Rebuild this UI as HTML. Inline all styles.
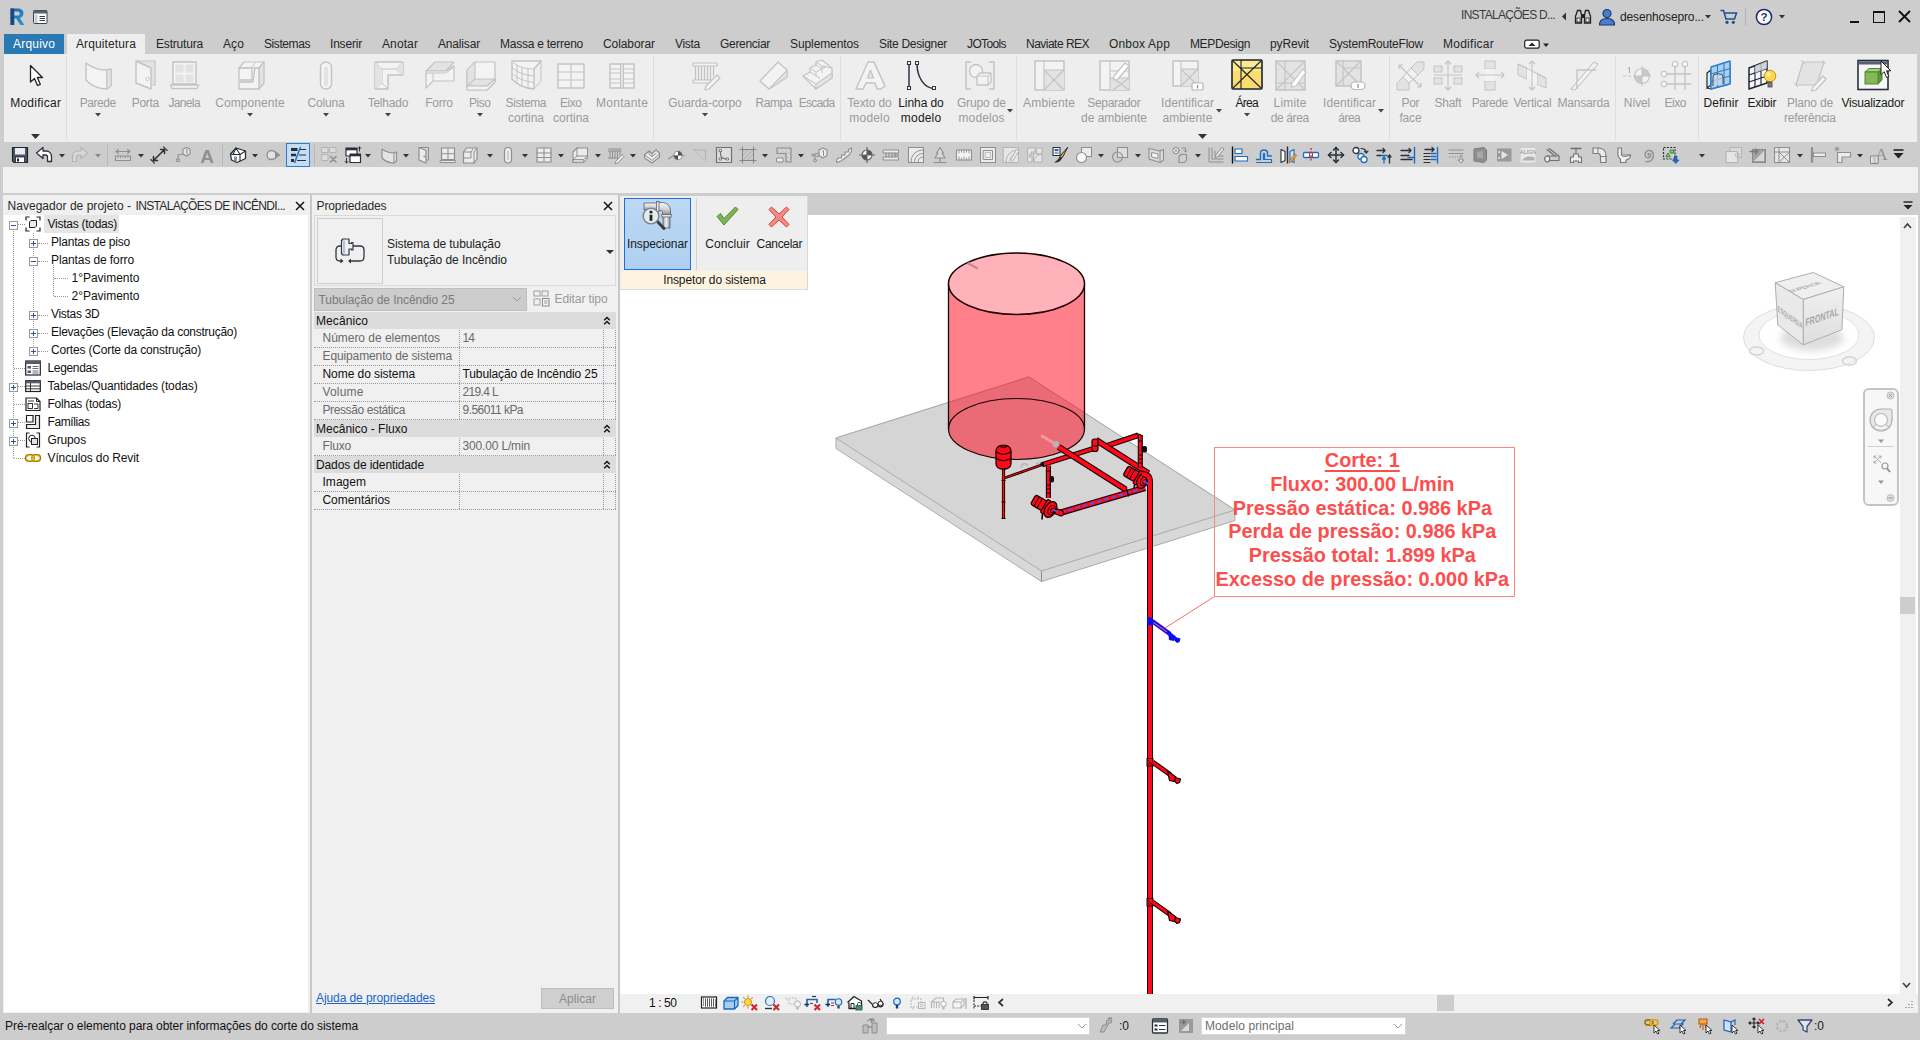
<!DOCTYPE html>
<html lang="pt-BR"><head><meta charset="utf-8"><title>Autodesk Revit - Inspetor do sistema</title>
<style>
html,body{margin:0;padding:0;}
html{width:1920px;height:1040px;overflow:hidden;}
body{width:1920px;height:1040px;overflow:hidden;background:#cdcdcd;font-family:"Liberation Sans", sans-serif;font-size:12px;position:relative;}
div{position:absolute;}
svg{position:absolute;overflow:visible;}
</style></head><body>
<div style="left:0px;top:0px;width:1920px;height:1040px;background:#cdcdcd;"></div>
<div style="left:4px;top:54px;width:1913px;height:88px;background:#eeeeee;"></div>
<div style="left:3px;top:167px;width:1915px;height:26px;background:#f0f0f0;"></div>
<svg style="left:9px;top:7px" width="18" height="20" viewBox="0 0 18 20">
<defs><linearGradient id="rg" x1="0" y1="0" x2="1" y2="1"><stop offset="0" stop-color="#1d63a8"/><stop offset="1" stop-color="#2f9bd0"/></linearGradient></defs>
<path d="M1.5 1.5 H9 C13 1.5 14.5 4 14.5 6.3 C14.5 8.8 13 10.5 10.8 11 L15.5 18 H11.3 L7.2 11.4 H5.2 V18 H1.5 Z M5.2 4.5 V8.6 H8.4 C10 8.6 10.8 7.7 10.8 6.5 C10.8 5.3 10 4.5 8.4 4.5 Z" fill="url(#rg)"/>
<path d="M1.5 1.5 H5.2 V18 H1.5 Z" fill="#164a86"/>
</svg>
<svg style="left:33px;top:10px" width="15" height="14" viewBox="0 0 15 14">
<rect x="0.5" y="0.5" width="13.5" height="13" rx="1" fill="#fff" stroke="#3a3f4d"/>
<rect x="0.5" y="0.5" width="13.5" height="3" fill="#5b6172"/>
<rect x="1.5" y="4.5" width="3" height="8.5" fill="#c9ccd6"/>
<path d="M6.5 6.5H12M6.5 8.5H12M6.5 10.5H12" stroke="#3a3f4d" stroke-width="1"/>
</svg>
<div id="t1" style="top:7.0px;line-height:16px;font-size:12px;color:#3c3c3c;white-space:nowrap;letter-spacing:-0.696px;left:1461px;"><span>INSTALAÇÕES D...</span></div>
<svg style="left:1561px;top:12px" width="6" height="9"><path d="M5 0.5 L1 4.5 L5 8.5Z" fill="#333"/></svg>
<svg style="left:1574px;top:9px" width="18" height="16" viewBox="0 0 18 16">
<path d="M2 6 L3.5 1.5 H6.5 L7.5 6 V14 H1.5 V7Z M10.5 6 L11.5 1.5 H14.5 L16 6 L16.5 7 V14 H10.5Z" fill="none" stroke="#222" stroke-width="1.3"/>
<rect x="7.5" y="5" width="3" height="4" fill="#222"/><rect x="3" y="9" width="3" height="4" fill="#fff" stroke="#222" stroke-width=".8"/><rect x="12" y="9" width="3" height="4" fill="#fff" stroke="#222" stroke-width=".8"/>
</svg>
<svg style="left:1598px;top:8px" width="18" height="18" viewBox="0 0 18 18">
<circle cx="9" cy="5.5" r="4" fill="#4d7cc9" stroke="#173b7a" stroke-width="1.2"/>
<path d="M1.5 17 C1.5 11.5 5 10.5 9 10.5 C13 10.5 16.5 11.5 16.5 17Z" fill="#4d7cc9" stroke="#173b7a" stroke-width="1.2"/>
</svg>
<div id="t2" style="top:9.0px;line-height:16px;font-size:12px;color:#222;white-space:nowrap;letter-spacing:-0.138px;left:1620px;"><span>desenhosepro...</span></div>
<svg style="left:1705px;top:15px" width="6" height="4"><path d="M0 0H6L3 3.500Z" fill="#333"/></svg>
<svg style="left:1720px;top:9px" width="18" height="16" viewBox="0 0 18 16">
<path d="M0.5 1.5 H3.5 L6 10 H14.5 L16.5 4 H4.5" fill="none" stroke="#1d4f91" stroke-width="1.5"/>
<circle cx="7" cy="13.3" r="1.6" fill="#1d4f91"/><circle cx="13.3" cy="13.3" r="1.6" fill="#1d4f91"/>
</svg>
<div style="left:1745px;top:8px;width:1px;height:18px;background:#b5b5b5;"></div>
<svg style="left:1755px;top:8px" width="18" height="18" viewBox="0 0 18 18">
<circle cx="9" cy="9" r="7.6" fill="#fff" stroke="#1b2f6b" stroke-width="1.5"/>
<text x="9" y="13.2" font-size="11.5" font-weight="bold" text-anchor="middle" fill="#1b2f6b" font-family="Liberation Sans, sans-serif">?</text>
</svg>
<svg style="left:1779px;top:15px" width="6" height="4"><path d="M0 0H6L3 3.500Z" fill="#333"/></svg>
<div style="left:1850px;top:21px;width:9px;height:2px;background:#111;"></div>
<div style="left:1873px;top:11px;width:12px;height:12px;border:1.6px solid #111;box-sizing:border-box;border-top-width:2.4px;"></div>
<svg style="left:1898px;top:10px" width="13" height="13"><path d="M1 1L12 12M12 1L1 12" stroke="#111" stroke-width="1.9"/></svg>
<div style="left:4px;top:34px;width:60px;height:20px;background:#2a79b3;"></div>
<div id="t3" style="top:36.0px;line-height:16px;font-size:12px;color:#fff;white-space:nowrap;letter-spacing:0.188px;left:-115.91px;width:300px;text-align:center;"><span>Arquivo</span></div>
<div style="left:67px;top:34px;width:78px;height:20px;background:#eeeeee;"></div>
<div id="t4" style="top:36.0px;line-height:16px;font-size:12px;color:#262626;white-space:nowrap;letter-spacing:0.118px;left:76px;"><span>Arquitetura</span></div>
<div id="t5" style="top:36.0px;line-height:16px;font-size:12px;color:#262626;white-space:nowrap;letter-spacing:-0.188px;left:156px;"><span>Estrutura</span></div>
<div id="t6" style="top:36.0px;line-height:16px;font-size:12px;color:#262626;white-space:nowrap;letter-spacing:0.104px;left:223px;"><span>Aço</span></div>
<div id="t7" style="top:36.0px;line-height:16px;font-size:12px;color:#262626;white-space:nowrap;letter-spacing:-0.420px;left:264px;"><span>Sistemas</span></div>
<div id="t8" style="top:36.0px;line-height:16px;font-size:12px;color:#262626;white-space:nowrap;letter-spacing:-0.192px;left:330px;"><span>Inserir</span></div>
<div id="t9" style="top:36.0px;line-height:16px;font-size:12px;color:#262626;white-space:nowrap;letter-spacing:0.107px;left:382px;"><span>Anotar</span></div>
<div id="t10" style="top:36.0px;line-height:16px;font-size:12px;color:#262626;white-space:nowrap;letter-spacing:-0.170px;left:438px;"><span>Analisar</span></div>
<div id="t11" style="top:36.0px;line-height:16px;font-size:12px;color:#262626;white-space:nowrap;letter-spacing:-0.248px;left:500px;"><span>Massa e terreno</span></div>
<div id="t12" style="top:36.0px;line-height:16px;font-size:12px;color:#262626;white-space:nowrap;letter-spacing:-0.078px;left:603px;"><span>Colaborar</span></div>
<div id="t13" style="top:36.0px;line-height:16px;font-size:12px;color:#262626;white-space:nowrap;letter-spacing:-0.294px;left:675px;"><span>Vista</span></div>
<div id="t14" style="top:36.0px;line-height:16px;font-size:12px;color:#262626;white-space:nowrap;letter-spacing:-0.299px;left:720px;"><span>Gerenciar</span></div>
<div id="t15" style="top:36.0px;line-height:16px;font-size:12px;color:#262626;white-space:nowrap;letter-spacing:-0.095px;left:790px;"><span>Suplementos</span></div>
<div id="t16" style="top:36.0px;line-height:16px;font-size:12px;color:#262626;white-space:nowrap;letter-spacing:-0.311px;left:879px;"><span>Site Designer</span></div>
<div id="t17" style="top:36.0px;line-height:16px;font-size:12px;color:#262626;white-space:nowrap;letter-spacing:-0.623px;left:967px;"><span>JOTools</span></div>
<div id="t18" style="top:36.0px;line-height:16px;font-size:12px;color:#262626;white-space:nowrap;letter-spacing:-0.518px;left:1026px;"><span>Naviate REX</span></div>
<div id="t19" style="top:36.0px;line-height:16px;font-size:12px;color:#262626;white-space:nowrap;letter-spacing:0.179px;left:1109px;"><span>Onbox App</span></div>
<div id="t20" style="top:36.0px;line-height:16px;font-size:12px;color:#262626;white-space:nowrap;letter-spacing:-0.373px;left:1190px;"><span>MEPDesign</span></div>
<div id="t21" style="top:36.0px;line-height:16px;font-size:12px;color:#262626;white-space:nowrap;letter-spacing:-0.145px;left:1270px;"><span>pyRevit</span></div>
<div id="t22" style="top:36.0px;line-height:16px;font-size:12px;color:#262626;white-space:nowrap;letter-spacing:-0.225px;left:1329px;"><span>SystemRouteFlow</span></div>
<div id="t23" style="top:36.0px;line-height:16px;font-size:12px;color:#262626;white-space:nowrap;letter-spacing:0.257px;left:1443px;"><span>Modificar</span></div>
<svg style="left:1524px;top:39px" width="26" height="11" viewBox="0 0 26 11">
<rect x="0.7" y="1.2" width="14.5" height="8" rx="2" fill="#fff" stroke="#222" stroke-width="1.2"/>
<path d="M4.5 7 H11.5 L8 3.6Z" fill="#222"/><path d="M19 4.5H25L22 8Z" fill="#222"/></svg>
<svg style="left:28px;top:64px" width="16" height="24" viewBox="0 0 16 24"><path d="M2.500 1.500 V18 L6.500 14.500 L9.500 21.500 L12.300 20.300 L9.300 13.500 H14.500Z" fill="#fff" stroke="#222" stroke-width="1.300" stroke-linejoin="round"/></svg>
<div id="t24" style="top:95.0px;line-height:16px;font-size:12px;color:#1a1a1a;white-space:nowrap;letter-spacing:0.257px;left:-114.37px;width:300px;text-align:center;"><span>Modificar</span></div>
<svg style="left:31px;top:134px" width="9" height="5"><path d="M0 0H9L4.500 5Z" fill="#333"/></svg>
<svg style="left:82px;top:59px" width="32" height="32" viewBox="0 0 32 32"><path d="M4 4 C10 9 18 11 25 11 L29 10 V27 L25 30 C16 30 8 26 4 21 Z" fill="#f3f3f3" stroke="#c3c3c3" stroke-width="1.4" stroke-linejoin="round"/><path d="M25 11 V30" fill="none" stroke="#c3c3c3" stroke-width="1.2" stroke-linejoin="round"/><path d="M25 11 L29 10 V27 L25 30Z" fill="#e3e3e3" stroke="#c3c3c3" stroke-width="1" stroke-linejoin="round"/></svg>
<div id="t25" style="top:95.0px;line-height:16px;font-size:12px;color:#9b9b9b;white-space:nowrap;letter-spacing:-0.451px;left:-52.23px;width:300px;text-align:center;"><span>Parede</span></div>
<svg style="left:95.0px;top:113px" width="6" height="4"><path d="M0 0H6L3 3.500Z" fill="#444"/></svg>
<svg style="left:130px;top:59px" width="32" height="32" viewBox="0 0 32 32"><path d="M6 2 H25 V26 H21" fill="#e3e3e3" stroke="#c3c3c3" stroke-width="1.2" stroke-linejoin="round"/><path d="M6 2 L21 9 V30 L6 24Z" fill="#f3f3f3" stroke="#c3c3c3" stroke-width="1.4" stroke-linejoin="round"/><circle cx="17.5" cy="20" r="1.6" fill="#fff" stroke="#c3c3c3" stroke-width="1" stroke-linejoin="round"/></svg>
<div id="t26" style="top:95.0px;line-height:16px;font-size:12px;color:#9b9b9b;white-space:nowrap;letter-spacing:-0.338px;left:-4.67px;width:300px;text-align:center;"><span>Porta</span></div>
<svg style="left:168px;top:59px" width="32" height="32" viewBox="0 0 32 32"><rect x="5" y="3" width="23" height="22" fill="#f3f3f3" stroke="#c3c3c3" stroke-width="1.4" stroke-linejoin="round"/><rect x="7.5" y="5.5" width="8" height="8" fill="#e3e3e3"/><rect x="17.5" y="5.5" width="8" height="8" fill="#e3e3e3"/><rect x="7.5" y="15.5" width="8" height="8" fill="#e3e3e3"/><rect x="17.5" y="15.5" width="8" height="8" fill="#e3e3e3"/><path d="M2.5 26 H30.5 L29 29.5 H4Z" fill="#f3f3f3" stroke="#c3c3c3" stroke-width="1.3" stroke-linejoin="round"/></svg>
<div id="t27" style="top:95.0px;line-height:16px;font-size:12px;color:#9b9b9b;white-space:nowrap;letter-spacing:-0.646px;left:34.18px;width:300px;text-align:center;"><span>Janela</span></div>
<svg style="left:234px;top:59px" width="32" height="32" viewBox="0 0 32 32"><path d="M5 9 L10 3 H30 L25 9Z" fill="#f3f3f3" stroke="#c3c3c3" stroke-width="1.2" stroke-linejoin="round"/><path d="M25 9 L30 3 V24 L25 30Z" fill="#e3e3e3" stroke="#c3c3c3" stroke-width="1.2" stroke-linejoin="round"/><path d="M5 9 H18 V21 H5Z" fill="#f3f3f3" stroke="#c3c3c3" stroke-width="1.3" stroke-linejoin="round"/><path d="M5 23 H19 L21 9 H25 V30 H5Z" fill="#f3f3f3" stroke="#c3c3c3" stroke-width="1.3" stroke-linejoin="round"/><path d="M18 9 L21 4" fill="none" stroke="#c3c3c3" stroke-width="1" stroke-linejoin="round"/></svg>
<div id="t28" style="top:95.0px;line-height:16px;font-size:12px;color:#9b9b9b;white-space:nowrap;letter-spacing:0.078px;left:100.04px;width:300px;text-align:center;"><span>Componente</span></div>
<svg style="left:247.0px;top:113px" width="6" height="4"><path d="M0 0H6L3 3.500Z" fill="#444"/></svg>
<svg style="left:310px;top:59px" width="32" height="32" viewBox="0 0 32 32"><rect x="10.5" y="3" width="11" height="27" rx="5.5" fill="#f3f3f3" stroke="#c3c3c3" stroke-width="1.4" stroke-linejoin="round"/><rect x="14" y="8" width="4" height="19" fill="#e3e3e3"/></svg>
<div id="t29" style="top:95.0px;line-height:16px;font-size:12px;color:#9b9b9b;white-space:nowrap;letter-spacing:-0.172px;left:175.91px;width:300px;text-align:center;"><span>Coluna</span></div>
<svg style="left:323.0px;top:113px" width="6" height="4"><path d="M0 0H6L3 3.500Z" fill="#444"/></svg>
<svg style="left:372px;top:59px" width="32" height="32" viewBox="0 0 32 32"><path d="M3 3 H31 V16 H16 V30 H3Z" fill="#f3f3f3" stroke="#c3c3c3" stroke-width="1.5" stroke-linejoin="round"/><path d="M3 3 L10 10 H31 M10 10 V24 L3 30 M10 24 L16 30 M24 10 L31 3 M24 10 L31 16" fill="none" stroke="#c3c3c3" stroke-width="1" stroke-linejoin="round"/><path d="M3 3 L10 10 V24 L3 30Z" fill="#e3e3e3"/><path d="M24 10 L31 3 V16Z" fill="#e3e3e3"/></svg>
<div id="t30" style="top:95.0px;line-height:16px;font-size:12px;color:#9b9b9b;white-space:nowrap;letter-spacing:-0.221px;left:237.89px;width:300px;text-align:center;"><span>Telhado</span></div>
<svg style="left:385.0px;top:113px" width="6" height="4"><path d="M0 0H6L3 3.500Z" fill="#444"/></svg>
<svg style="left:423px;top:59px" width="32" height="32" viewBox="0 0 32 32"><path d="M3 12 L12 3 H31 L23 12Z" fill="#e3e3e3" stroke="#c3c3c3" stroke-width="1.2" stroke-linejoin="round"/><path d="M3 12 H23 L31 7 V22 H10 L3 29Z" fill="#f3f3f3" stroke="#c3c3c3" stroke-width="1.2" stroke-linejoin="round"/><path d="M3 14 H23 L31 8" fill="none" stroke="#c3c3c3" stroke-width="1" stroke-linejoin="round"/><path d="M10 14 V22" fill="none" stroke="#c3c3c3" stroke-width="1" stroke-linejoin="round"/></svg>
<div id="t31" style="top:95.0px;line-height:16px;font-size:12px;color:#9b9b9b;white-space:nowrap;letter-spacing:-0.234px;left:288.88px;width:300px;text-align:center;"><span>Forro</span></div>
<svg style="left:464px;top:59px" width="32" height="32" viewBox="0 0 32 32"><path d="M3 11 L11 3 H31 V23 L23 31 H3Z" fill="#f3f3f3" stroke="#c3c3c3" stroke-width="1.2" stroke-linejoin="round"/><path d="M3 11 L11 3 V20 L3 28Z" fill="#e3e3e3" stroke="#c3c3c3"/><path d="M3 27 L11 20 H31 L23 27Z" fill="#e3e3e3" stroke="#c3c3c3" stroke-width="1.1" stroke-linejoin="round"/><path d="M3 27 H23 L31 20 V23 L23 31 H3Z" fill="#f3f3f3" stroke="#c3c3c3" stroke-width="1.1" stroke-linejoin="round"/></svg>
<div id="t32" style="top:95.0px;line-height:16px;font-size:12px;color:#9b9b9b;white-space:nowrap;letter-spacing:-0.461px;left:329.77px;width:300px;text-align:center;"><span>Piso</span></div>
<svg style="left:477.0px;top:113px" width="6" height="4"><path d="M0 0H6L3 3.500Z" fill="#444"/></svg>
<svg style="left:510px;top:59px" width="32" height="32" viewBox="0 0 32 32"><path d="M2 2 H31 L24 10 V30 C14 29 6 25 2 20Z" fill="#f3f3f3" stroke="#c3c3c3" stroke-width="1.4" stroke-linejoin="round"/><path d="M2 2 C6 7 14 10 24 10 M2 8 C6 13 14 16 24 17 M2 14 C6 19 14 22 24 23.5 M7 6 V24 M12 8 V27 M18 9.5 V29 M24 10 L31 2 V22 L24 30" fill="none" stroke="#c3c3c3" stroke-width="1" stroke-linejoin="round"/></svg>
<div id="t33" style="top:95.0px;line-height:16px;font-size:12px;color:#9b9b9b;white-space:nowrap;letter-spacing:-0.408px;left:375.80px;width:300px;text-align:center;"><span>Sistema</span></div>
<div id="t34" style="top:110.0px;line-height:16px;font-size:12px;color:#9b9b9b;white-space:nowrap;letter-spacing:-0.004px;left:376.00px;width:300px;text-align:center;"><span>cortina</span></div>
<svg style="left:555px;top:59px" width="32" height="32" viewBox="0 0 32 32"><rect x="3" y="5" width="26" height="24" fill="#f3f3f3" stroke="#c3c3c3" stroke-width="1.4" stroke-linejoin="round"/><path d="M16 5 V29 M3 13 H29 M3 21 H29" fill="none" stroke="#c3c3c3" stroke-width="1.1" stroke-linejoin="round"/></svg>
<div id="t35" style="top:95.0px;line-height:16px;font-size:12px;color:#9b9b9b;white-space:nowrap;letter-spacing:-0.461px;left:420.77px;width:300px;text-align:center;"><span>Eixo</span></div>
<div id="t36" style="top:110.0px;line-height:16px;font-size:12px;color:#9b9b9b;white-space:nowrap;letter-spacing:-0.004px;left:421.00px;width:300px;text-align:center;"><span>cortina</span></div>
<svg style="left:606px;top:59px" width="32" height="32" viewBox="0 0 32 32"><rect x="4" y="5" width="24" height="24" fill="#f3f3f3" stroke="#c3c3c3" stroke-width="1.4" stroke-linejoin="round"/><path d="M4 10 H28 M4 14 H28 M4 20 H28 M4 24 H28" fill="none" stroke="#c3c3c3" stroke-width="1" stroke-linejoin="round"/><rect x="14.5" y="5" width="3" height="24" fill="#e3e3e3" stroke="#c3c3c3" stroke-width="1" stroke-linejoin="round"/></svg>
<div id="t37" style="top:95.0px;line-height:16px;font-size:12px;color:#9b9b9b;white-space:nowrap;letter-spacing:0.244px;left:472.12px;width:300px;text-align:center;"><span>Montante</span></div>
<svg style="left:689px;top:59px" width="32" height="32" viewBox="0 0 32 32"><rect x="4" y="4" width="24" height="3" fill="#f3f3f3" stroke="#c3c3c3" stroke-width="1.2" stroke-linejoin="round"/><rect x="4" y="21" width="20" height="3" fill="#f3f3f3" stroke="#c3c3c3" stroke-width="1.2" stroke-linejoin="round"/><path d="M6.5 7V21M9.5 7V21M12.5 7V21M15.5 7V21M18.5 7V21M21.5 7V21M24.5 7V17" fill="none" stroke="#c3c3c3" stroke-width="1.1" stroke-linejoin="round"/><path d="M17 27 L28 16 L31 19 L20 30 L16 31Z" fill="#f3f3f3" stroke="#c3c3c3" stroke-width="1.2" stroke-linejoin="round"/></svg>
<div id="t38" style="top:95.0px;line-height:16px;font-size:12px;color:#9b9b9b;white-space:nowrap;letter-spacing:-0.046px;left:554.98px;width:300px;text-align:center;"><span>Guarda-corpo</span></div>
<svg style="left:702.0px;top:113px" width="6" height="4"><path d="M0 0H6L3 3.500Z" fill="#444"/></svg>
<svg style="left:758px;top:59px" width="32" height="32" viewBox="0 0 32 32"><path d="M2 22 L20 3 L29 11 V18 L11 30Z" fill="#f3f3f3" stroke="#c3c3c3" stroke-width="1.3" stroke-linejoin="round"/><path d="M29 11 L11 30 M29 11 V18 L11 30Z" fill="#e3e3e3" stroke="#c3c3c3" stroke-width="1" stroke-linejoin="round"/></svg>
<div id="t39" style="top:95.0px;line-height:16px;font-size:12px;color:#9b9b9b;white-space:nowrap;letter-spacing:-0.438px;left:623.78px;width:300px;text-align:center;"><span>Rampa</span></div>
<svg style="left:801px;top:59px" width="32" height="32" viewBox="0 0 32 32"><path d="M2 17 L9 13 V9 L15 6 V3 L21 1 L31 9 V19 L15 30 Z" fill="#f3f3f3" stroke="#c3c3c3" stroke-width="1.3" stroke-linejoin="round"/><path d="M2 17 L15 25 V30 M15 25 L31 14 M9 13 L19 19.500 M9 9 L15 13 V16.500 M15 13 L25 7.500 M15 6 L21 10 V14 M15 3 L21 7 L31 9 M21 7 V10" fill="none" stroke="#c3c3c3" stroke-width="1" stroke-linejoin="round"/><path d="M15 25 L31 14 V19 L15 30Z" fill="#e3e3e3" stroke="#c3c3c3"/></svg>
<div id="t40" style="top:95.0px;line-height:16px;font-size:12px;color:#9b9b9b;white-space:nowrap;letter-spacing:-0.755px;left:666.62px;width:300px;text-align:center;"><span>Escada</span></div>
<svg style="left:854px;top:59px" width="32" height="32" viewBox="0 0 32 32"><path d="M2 30 L14 3 H20 L31 27 L27 30 H23 L21 24 H12 L9 30Z" fill="#f3f3f3" stroke="#c3c3c3" stroke-width="1.4" stroke-linejoin="round"/><path d="M13.5 19 L16.5 11 L19.5 19Z" fill="#e3e3e3" stroke="#c3c3c3" stroke-width="1.2" stroke-linejoin="round"/><path d="M20 3 L31 27" fill="none" stroke="#c3c3c3" stroke-width="1" stroke-linejoin="round"/></svg>
<div id="t41" style="top:95.0px;line-height:16px;font-size:12px;color:#9b9b9b;white-space:nowrap;letter-spacing:-0.109px;left:719.45px;width:300px;text-align:center;"><span>Texto do</span></div>
<div id="t42" style="top:110.0px;line-height:16px;font-size:12px;color:#9b9b9b;white-space:nowrap;letter-spacing:0.190px;left:719.60px;width:300px;text-align:center;"><span>modelo</span></div>
<svg style="left:902px;top:59px" width="32" height="32" viewBox="0 0 32 32"><path d="M7 4.5 V27.5" fill="none" stroke="#2b3544" stroke-width="1.5" stroke-linejoin="round"/><path d="M15 4.5 C15 18 22 29 32 29.5" fill="none" stroke="#2b3544" stroke-width="1.5" stroke-linejoin="round"/><rect x="5.5" y="2.5" width="3" height="3" fill="#fff" stroke="#2b3544" stroke-width="1.1" stroke-linejoin="round"/><rect x="5.5" y="27.5" width="3" height="3" fill="#fff" stroke="#2b3544" stroke-width="1.1" stroke-linejoin="round"/><rect x="13.5" y="2.5" width="3" height="3" fill="#fff" stroke="#2b3544" stroke-width="1.1" stroke-linejoin="round"/><rect x="30.5" y="27.5" width="3" height="3" fill="#fff" stroke="#2b3544" stroke-width="1.1" stroke-linejoin="round"/></svg>
<div id="t43" style="top:95.0px;line-height:16px;font-size:12px;color:#1a1a1a;white-space:nowrap;letter-spacing:-0.068px;left:770.97px;width:300px;text-align:center;"><span>Linha do</span></div>
<div id="t44" style="top:110.0px;line-height:16px;font-size:12px;color:#1a1a1a;white-space:nowrap;letter-spacing:0.190px;left:771.10px;width:300px;text-align:center;"><span>modelo</span></div>
<svg style="left:964px;top:59px" width="32" height="32" viewBox="0 0 32 32"><path d="M7 3 H2 V30 H7 M25 3 H30 V30 H25" fill="none" stroke="#c3c3c3" stroke-width="1.5" stroke-linejoin="round"/><circle cx="12" cy="12" r="6.5" fill="#f3f3f3" stroke="#c3c3c3" stroke-width="1.3" stroke-linejoin="round"/><path d="M13 17 L16 14 H27 V23 L24 26 H13Z" fill="#f3f3f3" stroke="#c3c3c3" stroke-width="1.3" stroke-linejoin="round"/><path d="M13 17 H24 V26 M24 17 L27 14" fill="none" stroke="#c3c3c3" stroke-width="1" stroke-linejoin="round"/></svg>
<div id="t45" style="top:95.0px;line-height:16px;font-size:12px;color:#9b9b9b;white-space:nowrap;letter-spacing:-0.131px;left:831.43px;width:300px;text-align:center;"><span>Grupo de</span></div>
<div id="t46" style="top:110.0px;line-height:16px;font-size:12px;color:#9b9b9b;white-space:nowrap;letter-spacing:0.092px;left:831.55px;width:300px;text-align:center;"><span>modelos</span></div>
<svg style="left:1007px;top:109px" width="6" height="4"><path d="M0 0H6L3 3.500Z" fill="#444"/></svg>
<svg style="left:1033px;top:59px" width="32" height="32" viewBox="0 0 32 32"><rect x="2" y="2" width="29" height="29" fill="#f3f3f3" stroke="#c3c3c3" stroke-width="1.5" stroke-linejoin="round"/><rect x="11" y="11" width="20" height="20" fill="#e3e3e3"/><path d="M11 2 V31 M11 11 H31 M11 11 L31 31 M31 11 L11 31" fill="none" stroke="#c3c3c3" stroke-width="1.1" stroke-linejoin="round"/></svg>
<div id="t47" style="top:95.0px;line-height:16px;font-size:12px;color:#9b9b9b;white-space:nowrap;letter-spacing:0.162px;left:899.08px;width:300px;text-align:center;"><span>Ambiente</span></div>
<svg style="left:1098px;top:59px" width="32" height="32" viewBox="0 0 32 32"><rect x="2" y="2" width="29" height="29" fill="#f3f3f3" stroke="#c3c3c3" stroke-width="1.5" stroke-linejoin="round"/><rect x="12" y="19" width="19" height="12" fill="#e3e3e3"/><path d="M12 2 V31 M12 12 H31 M12 19 H31 M15 19 L31 31 M31 19 L15 31" fill="none" stroke="#c3c3c3" stroke-width="1.1" stroke-linejoin="round"/><path d="M16 17 L27 4 L31 7 L20 20 L15.5 21Z" fill="#fff" stroke="#c3c3c3" stroke-width="1.2" stroke-linejoin="round"/></svg>
<div id="t48" style="top:95.0px;line-height:16px;font-size:12px;color:#9b9b9b;white-space:nowrap;letter-spacing:-0.339px;left:963.83px;width:300px;text-align:center;"><span>Separador</span></div>
<div id="t49" style="top:110.0px;line-height:16px;font-size:12px;color:#9b9b9b;white-space:nowrap;letter-spacing:-0.004px;left:964.00px;width:300px;text-align:center;"><span>de ambiente</span></div>
<svg style="left:1169px;top:59px" width="32" height="32" viewBox="0 0 32 32"><rect x="4" y="2" width="25" height="25" fill="#f3f3f3" stroke="#c3c3c3" stroke-width="1.5" stroke-linejoin="round"/><rect x="12" y="10" width="17" height="17" fill="#e3e3e3"/><path d="M12 2 V27 M12 10 H29 M12 10 L29 27 M29 10 L12 27" fill="none" stroke="#c3c3c3" stroke-width="1.1" stroke-linejoin="round"/><rect x="23" y="24" width="11" height="7" rx="1" fill="#fff" stroke="#b5b5b5" stroke-width="1.2" stroke-linejoin="round"/><path d="M28.5 26 V29.5" stroke="#888" stroke-width="1.2"/></svg>
<div id="t50" style="top:95.0px;line-height:16px;font-size:12px;color:#9b9b9b;white-space:nowrap;letter-spacing:0.088px;left:1037.54px;width:300px;text-align:center;"><span>Identificar</span></div>
<div id="t51" style="top:110.0px;line-height:16px;font-size:12px;color:#9b9b9b;white-space:nowrap;letter-spacing:0.078px;left:1037.54px;width:300px;text-align:center;"><span>ambiente</span></div>
<svg style="left:1216px;top:109px" width="6" height="4"><path d="M0 0H6L3 3.500Z" fill="#444"/></svg>
<svg style="left:1231px;top:59px" width="32" height="32" viewBox="0 0 32 32"><rect x="1" y="1" width="30" height="29" rx="1" fill="#fbdc6e" stroke="#1c2330" stroke-width="1.6"/><rect x="2" y="2" width="28" height="10" fill="#fde98f"/><path d="M2 2 L30 29 M30 2 L2 29 M10 1 V30 M10 9 H31" stroke="#1c2330" stroke-width="1.1" fill="none"/></svg>
<div id="t52" style="top:95.0px;line-height:16px;font-size:12px;color:#1a1a1a;white-space:nowrap;letter-spacing:-0.715px;left:1096.64px;width:300px;text-align:center;"><span>Área</span></div>
<svg style="left:1244.0px;top:113px" width="6" height="4"><path d="M0 0H6L3 3.500Z" fill="#444"/></svg>
<svg style="left:1274px;top:59px" width="32" height="32" viewBox="0 0 32 32"><rect x="2" y="2" width="29" height="29" fill="#e3e3e3" stroke="#c3c3c3" stroke-width="1.5" stroke-linejoin="round"/><path d="M2 2 L31 31 M31 2 L2 31 M11 2 V31 M2 24 H31" fill="none" stroke="#c3c3c3" stroke-width="1.1" stroke-linejoin="round"/><path d="M18 24 L29 10 L32 13 L22 27 L17 28Z" fill="#fff" stroke="#c3c3c3" stroke-width="1.2" stroke-linejoin="round"/></svg>
<div id="t53" style="top:95.0px;line-height:16px;font-size:12px;color:#9b9b9b;white-space:nowrap;letter-spacing:0.164px;left:1140.08px;width:300px;text-align:center;"><span>Limite</span></div>
<div id="t54" style="top:110.0px;line-height:16px;font-size:12px;color:#9b9b9b;white-space:nowrap;letter-spacing:-0.386px;left:1139.81px;width:300px;text-align:center;"><span>de área</span></div>
<svg style="left:1332px;top:59px" width="32" height="32" viewBox="0 0 32 32"><rect x="4" y="2" width="25" height="25" fill="#e3e3e3" stroke="#c3c3c3" stroke-width="1.5" stroke-linejoin="round"/><path d="M4 2 L29 27 M29 2 L4 27 M11 2 V27 M11 9 H29" fill="none" stroke="#c3c3c3" stroke-width="1.1" stroke-linejoin="round"/><rect x="19" y="23" width="14" height="7.5" rx="3.7" fill="#fff" stroke="#b5b5b5" stroke-width="1.2" stroke-linejoin="round"/><path d="M26 25 V29" stroke="#888" stroke-width="1.2"/></svg>
<div id="t55" style="top:95.0px;line-height:16px;font-size:12px;color:#9b9b9b;white-space:nowrap;letter-spacing:0.088px;left:1199.54px;width:300px;text-align:center;"><span>Identificar</span></div>
<div id="t56" style="top:110.0px;line-height:16px;font-size:12px;color:#9b9b9b;white-space:nowrap;letter-spacing:-0.508px;left:1199.25px;width:300px;text-align:center;"><span>área</span></div>
<svg style="left:1378px;top:109px" width="6" height="4"><path d="M0 0H6L3 3.500Z" fill="#444"/></svg>
<svg style="left:1394px;top:59px" width="32" height="32" viewBox="0 0 32 32"><path d="M3 24 L9 18 L15 24 V31 H3Z" fill="#e3e3e3" stroke="#c3c3c3" stroke-width="1" stroke-linejoin="round"/><path d="M17 9 L23 3 H30 V10 L24 16Z" fill="#e3e3e3" stroke="#c3c3c3" stroke-width="1" stroke-linejoin="round"/><path d="M9 18 L17 9 L24 16 L15 24Z" fill="#f3f3f3" stroke="#c3c3c3" stroke-width="1" stroke-linejoin="round"/><path d="M5 6 L27 28 M5 6 V10 M5 6 H9 M27 28 V24 M27 28 H23" fill="none" stroke="#c3c3c3" stroke-width="1.2" stroke-linejoin="round"/></svg>
<div id="t57" style="top:95.0px;line-height:16px;font-size:12px;color:#9b9b9b;white-space:nowrap;letter-spacing:-0.229px;left:1260.39px;width:300px;text-align:center;"><span>Por</span></div>
<div id="t58" style="top:110.0px;line-height:16px;font-size:12px;color:#9b9b9b;white-space:nowrap;letter-spacing:-0.172px;left:1260.41px;width:300px;text-align:center;"><span>face</span></div>
<svg style="left:1432px;top:59px" width="32" height="32" viewBox="0 0 32 32"><rect x="2" y="7" width="8" height="6" fill="#e3e3e3" stroke="#c3c3c3"/><rect x="22" y="7" width="8" height="6" fill="#e3e3e3" stroke="#c3c3c3"/><rect x="2" y="19" width="8" height="6" fill="#e3e3e3" stroke="#c3c3c3"/><rect x="22" y="19" width="8" height="6" fill="#e3e3e3" stroke="#c3c3c3"/><path d="M2 16 H30 M16 2 V31 M13 5 L16 2 L19 5 M13 28 L16 31 L19 28" fill="none" stroke="#c3c3c3" stroke-width="1.1" stroke-linejoin="round"/></svg>
<div id="t59" style="top:95.0px;line-height:16px;font-size:12px;color:#9b9b9b;white-space:nowrap;letter-spacing:-0.206px;left:1297.90px;width:300px;text-align:center;"><span>Shaft</span></div>
<svg style="left:1474px;top:59px" width="32" height="32" viewBox="0 0 32 32"><rect x="11" y="2" width="10" height="8" fill="#e3e3e3" stroke="#c3c3c3"/><rect x="11" y="22" width="10" height="9" fill="#e3e3e3" stroke="#c3c3c3"/><rect x="11" y="10" width="10" height="12" fill="#f3f3f3"/><path d="M2 16 H30 M5 13 L2 16 L5 19 M27 13 L30 16 L27 19" fill="none" stroke="#c3c3c3" stroke-width="1.1" stroke-linejoin="round"/></svg>
<div id="t60" style="top:95.0px;line-height:16px;font-size:12px;color:#9b9b9b;white-space:nowrap;letter-spacing:-0.451px;left:1339.77px;width:300px;text-align:center;"><span>Parede</span></div>
<svg style="left:1516px;top:59px" width="32" height="32" viewBox="0 0 32 32"><path d="M2 5 L11 9 V20 L2 16Z" fill="#e3e3e3" stroke="#c3c3c3"/><path d="M21 15 L30 19 V29 L21 25Z" fill="#e3e3e3" stroke="#c3c3c3"/><path d="M11 9 L21 15 V25 L11 20Z" fill="#f3f3f3"/><path d="M2 5 L30 19 M16 2 V31 M13 5 L16 2 L19 5 M13 28 L16 31 L19 28" fill="none" stroke="#c3c3c3" stroke-width="1.1" stroke-linejoin="round"/></svg>
<div id="t61" style="top:95.0px;line-height:16px;font-size:12px;color:#9b9b9b;white-space:nowrap;letter-spacing:-0.170px;left:1382.41px;width:300px;text-align:center;"><span>Vertical</span></div>
<svg style="left:1568px;top:59px" width="32" height="32" viewBox="0 0 32 32"><path d="M3 30 L26 3 L30 5 L7 31Z" fill="#f3f3f3" stroke="#c3c3c3" stroke-width="1.1" stroke-linejoin="round"/><path d="M9 30 V11 H28" fill="none" stroke="#c3c3c3" stroke-width="1.3" stroke-linejoin="round"/></svg>
<div id="t62" style="top:95.0px;line-height:16px;font-size:12px;color:#9b9b9b;white-space:nowrap;letter-spacing:-0.172px;left:1433.41px;width:300px;text-align:center;"><span>Mansarda</span></div>
<svg style="left:1621px;top:59px" width="32" height="32" viewBox="0 0 32 32"><circle cx="21" cy="17" r="7.5" fill="#f3f3f3" stroke="#c3c3c3" stroke-width="1.2"/><path d="M21 17 V9.5 A7.5 7.5 0 0 1 28.500 17Z M21 17 V24.5 A7.5 7.5 0 0 1 13.5 17Z" fill="#c8c8c8"/><path d="M2 17 H5 M7 17 H10 M12 17 H30 M21 7 V27" fill="none" stroke="#c3c3c3" stroke-width="1.1" stroke-linejoin="round"/><path d="M7 9.5 L8.5 8.5 V14" fill="none" stroke="#b0b0b0" stroke-width="1.1" stroke-linejoin="round"/></svg>
<div id="t63" style="top:95.0px;line-height:16px;font-size:12px;color:#9b9b9b;white-space:nowrap;letter-spacing:-0.269px;left:1486.87px;width:300px;text-align:center;"><span>Nível</span></div>
<svg style="left:1660px;top:59px" width="32" height="32" viewBox="0 0 32 32"><path d="M7 15 H31 M7 25 H31 M15 8 V31 M25 8 V31" fill="none" stroke="#c3c3c3" stroke-width="1.3" stroke-linejoin="round"/><circle cx="15" cy="5" r="2.7" fill="#fff" stroke="#c3c3c3" stroke-width="1.2" stroke-linejoin="round"/><circle cx="25" cy="5" r="2.7" fill="#fff" stroke="#c3c3c3" stroke-width="1.2" stroke-linejoin="round"/><circle cx="4" cy="15" r="2.7" fill="#fff" stroke="#c3c3c3" stroke-width="1.2" stroke-linejoin="round"/><circle cx="4" cy="25" r="2.7" fill="#fff" stroke="#c3c3c3" stroke-width="1.2" stroke-linejoin="round"/></svg>
<div id="t64" style="top:95.0px;line-height:16px;font-size:12px;color:#9b9b9b;white-space:nowrap;letter-spacing:-0.461px;left:1525.27px;width:300px;text-align:center;"><span>Eixo</span></div>
<svg style="left:1705px;top:59px" width="32" height="32" viewBox="0 0 32 32"><path d="M2 14 L6 11 V26 L2 29Z" fill="#e8eef6" stroke="#1c2330" stroke-width="1.2"/><path d="M6 11 L25 4 V25 L6 30 L2 29" fill="none" stroke="#1c2330" stroke-width="1"/><path d="M6 8 L25 2 V25 L6 30Z" fill="#a9d0ee" stroke="#2a7fd0" stroke-width="1.4" stroke-linejoin="round"/><path d="M6 15 L25 9.500 M6 22.5 L25 17 M12.5 6 V28.3 M19 4 V26.6" stroke="#2a7fd0" stroke-width="1.1"/><path d="M8 27 V18 Q8 15 11 15 H15 Q18 15 18 18 V25" fill="#c9dcee" fill-opacity=".7" stroke="#4a4a4a" stroke-width="1"/></svg>
<div id="t65" style="top:95.0px;line-height:16px;font-size:12px;color:#1a1a1a;white-space:nowrap;letter-spacing:0.045px;left:1571.02px;width:300px;text-align:center;"><span>Definir</span></div>
<svg style="left:1746px;top:59px" width="32" height="32" viewBox="0 0 32 32"><path d="M3 9 L21 2 V24 L3 30Z" fill="#f4f5f8" stroke="#20242e" stroke-width="1.5" stroke-linejoin="round"/><path d="M3 16 L21 9.500 M3 23 L21 17 M9 6.700 V28 M15 4.400 V26" stroke="#20242e" stroke-width="1.1"/><path d="M9 6.700 L21 2 V9.5 L9 14Z" fill="#c8ccd6" fill-opacity=".8"/><circle cx="24" cy="17" r="5.800" fill="#ffd84a" stroke="#c79a12" stroke-width="1"/><circle cx="22.500" cy="15.500" r="2.200" fill="#fff3b0"/><rect x="22" y="23" width="4" height="5" fill="#7a7a7a" stroke="#444" stroke-width=".8"/></svg>
<div id="t66" style="top:95.0px;line-height:16px;font-size:12px;color:#1a1a1a;white-space:nowrap;letter-spacing:-0.169px;left:1611.92px;width:300px;text-align:center;"><span>Exibir</span></div>
<svg style="left:1794px;top:59px" width="32" height="32" viewBox="0 0 32 32"><path d="M9 3 L30 3 L23 26 L2 26Z" fill="#e3e3e3" stroke="#c3c3c3" stroke-width="1.2" stroke-linejoin="round"/><path d="M7 1 L11 5 M28 1 L32 5 M0 24 L4 28" fill="none" stroke="#c3c3c3" stroke-width="1" stroke-linejoin="round"/><path d="M19 28 L29 17 L32 20 L22 31 L17.500 32Z" fill="#f3f3f3" stroke="#c3c3c3" stroke-width="1.2" stroke-linejoin="round"/></svg>
<div id="t67" style="top:95.0px;line-height:16px;font-size:12px;color:#9b9b9b;white-space:nowrap;letter-spacing:-0.172px;left:1659.91px;width:300px;text-align:center;"><span>Plano de</span></div>
<div id="t68" style="top:110.0px;line-height:16px;font-size:12px;color:#9b9b9b;white-space:nowrap;letter-spacing:-0.138px;left:1659.93px;width:300px;text-align:center;"><span>referência</span></div>
<svg style="left:1857px;top:59px" width="32" height="32" viewBox="0 0 32 32"><rect x="1" y="1.5" width="30" height="29" fill="#f7f7f9" stroke="#2a2f3c" stroke-width="1.6"/><rect x="1.800" y="2.300" width="28.400" height="3.200" fill="#5a6072"/><path d="M8 13 L12 9.500 H25 L21 13Z" fill="#a6d07c" stroke="#4e8a2c" stroke-width="1"/><path d="M21 13 L25 9.500 V21 L21 25Z" fill="#5f9638" stroke="#4e8a2c" stroke-width="1"/><rect x="8" y="13" width="13" height="12" fill="#84b95a" stroke="#4e8a2c" stroke-width="1"/></svg>
<div id="t69" style="top:95.0px;line-height:16px;font-size:12px;color:#1a1a1a;white-space:nowrap;letter-spacing:-0.180px;left:1722.91px;width:300px;text-align:center;"><span>Visualizador</span></div>
<svg style="left:1198px;top:134px" width="9" height="5"><path d="M0 0H9L4.500 5Z" fill="#333"/></svg>
<div style="left:66px;top:56px;width:1px;height:84px;background:#dedede;"></div>
<div style="left:653px;top:56px;width:1px;height:84px;background:#dedede;"></div>
<div style="left:840px;top:56px;width:1px;height:84px;background:#dedede;"></div>
<div style="left:1016px;top:56px;width:1px;height:84px;background:#dedede;"></div>
<div style="left:1389px;top:56px;width:1px;height:84px;background:#dedede;"></div>
<div style="left:1615px;top:56px;width:1px;height:84px;background:#dedede;"></div>
<div style="left:1698px;top:56px;width:1px;height:84px;background:#dedede;"></div>
<svg style="left:1880px;top:60px" width="12" height="19" viewBox="0 0 12 19"><path d="M1 1 V14.500 L4.200 11.700 L6.500 17.500 L8.800 16.500 L6.500 10.800 H10.800Z" fill="#fff" stroke="#222" stroke-width="1" stroke-linejoin="round"/></svg>
<div style="left:0px;top:142px;width:1920px;height:25px;background:#cdcdcd;"></div>
<div style="left:286px;top:143px;width:24px;height:24px;background:#c6dcf3;border:1px solid #2a7fd3;box-sizing:border-box;"></div>
<svg style="left:11.0px;top:146.0px" width="18" height="18" viewBox="0 0 18 18"><path d="M1.500 1.500 H16.500 V16.500 H3 L1.500 15Z" fill="#4b5568" stroke="#1f2532" stroke-width="1.200"/><rect x="4" y="2" width="10" height="6.500" fill="#e9edf3"/><rect x="4.500" y="11" width="9" height="5.500" fill="#fff" stroke="#1f2532" stroke-width=".8"/><rect x="6" y="12.500" width="2" height="3" fill="#1f2532"/></svg>
<svg style="left:35.0px;top:146.0px" width="18" height="18" viewBox="0 0 18 18"><path d="M1.500 7 L8 1.500 V5 H11 C14.500 5 16.500 7.500 16.500 10.500 V15.500 H12.500 V11 C12.500 9.600 11.800 9 10.500 9 H8 V12.500Z" fill="#fff" stroke="#2a2f3a" stroke-width="1.3" stroke-linejoin="round" stroke-linecap="round"/></svg>
<svg style="left:58.5px;top:153.5px" width="6" height="4"><path d="M0 0H6L3 3.500Z" fill="#333"/></svg>
<svg style="left:71.0px;top:146.0px" width="18" height="18" viewBox="0 0 18 18"><path d="M16.500 7 L10 1.500 V5 H7 C3.500 5 1.500 7.500 1.500 10.500 V15.500 H5.500 V11 C5.500 9.600 6.200 9 7.500 9 H10 V12.500Z" fill="#d9d9d9" stroke="#b4b4b4" stroke-width="1.2" stroke-linejoin="round" stroke-linecap="round"/></svg>
<svg style="left:94.5px;top:153.5px" width="6" height="4"><path d="M0 0H6L3 3.500Z" fill="#8a8a8a"/></svg>
<svg style="left:113.5px;top:146.0px" width="18" height="18" viewBox="0 0 18 18"><rect x="1.500" y="10" width="15" height="4.500" fill="#d6d6d6" stroke="#8f8f8f" stroke-width="1.1" stroke-linejoin="round" stroke-linecap="round"/><path d="M4 10V12M6.500 10V12M9 10V12M11.500 10V12M14 10V12" fill="none" stroke="#8f8f8f" stroke-width="0.9" stroke-linejoin="round" stroke-linecap="round"/><path d="M2 5.500 H16 M4.500 3.500 L2 5.500 L4.500 7.500 M13.500 3.500 L16 5.500 L13.500 7.500" fill="none" stroke="#8f8f8f" stroke-width="1.1" stroke-linejoin="round" stroke-linecap="round"/></svg>
<svg style="left:137.5px;top:153.5px" width="6" height="4"><path d="M0 0H6L3 3.500Z" fill="#333"/></svg>
<svg style="left:150.0px;top:146.0px" width="18" height="18" viewBox="0 0 18 18"><path d="M3.500 14.500 L14.500 3.500 M3.500 14.500 V10.500 M3.500 14.500 H7.500 M14.500 3.500 V7.500 M14.500 3.500 H10.500" fill="none" stroke="#2a2f3a" stroke-width="1.5" stroke-linejoin="round" stroke-linecap="round"/><path d="M0.800 13.500 L4.500 17.200 M13.500 0.800 L17.200 4.500" fill="none" stroke="#2a2f3a" stroke-width="1.1" stroke-linejoin="round" stroke-linecap="round"/></svg>
<svg style="left:173.5px;top:146.0px" width="18" height="18" viewBox="0 0 18 18"><path d="M9 3 L12.500 1.500 L16 3 V8 L12.500 10 L9 8Z" fill="#e6e6e6" stroke="#8f8f8f" stroke-width="1.1" stroke-linejoin="round" stroke-linecap="round"/><path d="M12.200 4 L13 3.500 V8" fill="none" stroke="#8f8f8f" stroke-width="1" stroke-linejoin="round" stroke-linecap="round"/><path d="M9 8 L4 9 V13" fill="none" stroke="#8f8f8f" stroke-width="1.1" stroke-linejoin="round" stroke-linecap="round"/><rect x="2.800" y="13" width="2.500" height="2.500" fill="none" stroke="#8f8f8f" stroke-width="1" stroke-linejoin="round" stroke-linecap="round"/></svg>
<svg style="left:197.5px;top:146.0px" width="18" height="18" viewBox="0 0 18 18"><text x="9" y="16.500" font-size="19" font-weight="bold" text-anchor="middle" fill="#8f8f8f" font-family="Liberation Sans, sans-serif">A</text></svg>
<svg style="left:228.5px;top:146.0px" width="18" height="18" viewBox="0 0 18 18"><path d="M1.500 8 L7 2 L16.500 5 V12.500 L8 16.500 L2.500 14Z" fill="#fff" stroke="#2a2f3a" stroke-width="1.3" stroke-linejoin="round" stroke-linecap="round"/><path d="M7 2 L11 8.500 L16.500 5 M11 8.500 V15 M1.500 8 L4 8.500 L7 2" fill="none" stroke="#2a2f3a" stroke-width="1.1" stroke-linejoin="round" stroke-linecap="round"/><path d="M4 8.500 L11 8.500" fill="none" stroke="#2a2f3a" stroke-width="1" stroke-linejoin="round" stroke-linecap="round"/><rect x="5" y="10.500" width="3" height="4.500" fill="#8893a8"/></svg>
<svg style="left:252.0px;top:153.5px" width="6" height="4"><path d="M0 0H6L3 3.500Z" fill="#333"/></svg>
<svg style="left:263.5px;top:146.0px" width="18" height="18" viewBox="0 0 18 18"><circle cx="7.500" cy="9" r="4.500" fill="#e2e2e2" stroke="#8f8f8f" stroke-width="1.3" stroke-linejoin="round" stroke-linecap="round"/><path d="M11 5 L16.500 9 L11 13Z" fill="#8f8f8f"/></svg>
<svg style="left:289.0px;top:146.0px" width="18" height="18" viewBox="0 0 18 18"><path d="M2 3.500 H8.500" stroke="#2a2f3a" stroke-width="3"/><path d="M2 9 H7" stroke="#2a2f3a" stroke-width="2.500"/><path d="M2 14.500 H5" stroke="#2a2f3a" stroke-width="3"/><path d="M11 3.500 H17 M10 9 H17 M8 14.500 H17" stroke="#2a2f3a" stroke-width="1"/><path d="M11.500 1 L5.500 17" stroke="#1a6fc4" stroke-width="1.400"/></svg>
<svg style="left:320.0px;top:146.0px" width="18" height="18" viewBox="0 0 18 18"><rect x="2" y="1.500" width="6" height="5" fill="#dcdcdc" stroke="#b4b4b4" stroke-width="1" stroke-linejoin="round" stroke-linecap="round"/><rect x="10" y="1.500" width="6" height="5" fill="#dcdcdc" stroke="#b4b4b4" stroke-width="1" stroke-linejoin="round" stroke-linecap="round"/><rect x="2" y="8.500" width="6" height="6" fill="#dcdcdc" stroke="#b4b4b4" stroke-width="1" stroke-linejoin="round" stroke-linecap="round"/><path d="M10.500 10.500 L16 16 M16 10.500 L10.500 16" fill="none" stroke="#8f8f8f" stroke-width="1.6" stroke-linejoin="round" stroke-linecap="round"/></svg>
<svg style="left:344.0px;top:146.0px" width="18" height="18" viewBox="0 0 18 18"><rect x="2" y="2" width="11" height="8" fill="#fff" stroke="#2a2f3a" stroke-width="1.2" stroke-linejoin="round" stroke-linecap="round"/><rect x="2" y="2" width="11" height="2.300" fill="#2a2f3a"/><rect x="6" y="8" width="10.500" height="8.500" fill="#fff" stroke="#2a2f3a" stroke-width="1.2" stroke-linejoin="round" stroke-linecap="round"/><rect x="6" y="8" width="10.500" height="2.300" fill="#2a2f3a"/><path d="M15.500 1 V5 M14 2.500 L15.500 1 L17 2.500 M2.500 17 V12.500 M1 15.500 L2.500 17 L4 15.500" fill="none" stroke="#2a2f3a" stroke-width="1" stroke-linejoin="round" stroke-linecap="round"/></svg>
<svg style="left:365.0px;top:153.5px" width="6" height="4"><path d="M0 0H6L3 3.500Z" fill="#333"/></svg>
<svg style="left:380.0px;top:146.0px" width="18" height="18" viewBox="0 0 18 18"><path d="M2 3 C6 6 10 7 14 7 L16.500 6 V15 L14 17 C9 17 5 15 2 12Z" fill="#e4e4e4" stroke="#8f8f8f" stroke-width="1.2" stroke-linejoin="round" stroke-linecap="round"/><path d="M14 7V17" fill="none" stroke="#8f8f8f" stroke-width="1" stroke-linejoin="round" stroke-linecap="round"/></svg>
<svg style="left:402.5px;top:153.5px" width="6" height="4"><path d="M0 0H6L3 3.500Z" fill="#333"/></svg>
<svg style="left:414.0px;top:146.0px" width="18" height="18" viewBox="0 0 18 18"><path d="M5 1.500 H14.500 V14 H12" fill="#d0d0d0" stroke="#8f8f8f" stroke-width="1" stroke-linejoin="round" stroke-linecap="round"/><path d="M5 1.500 L12 4.500 V17 L5 14Z" fill="#ececec" stroke="#8f8f8f" stroke-width="1.2" stroke-linejoin="round" stroke-linecap="round"/><circle cx="10.300" cy="10.500" r=".9" fill="#8f8f8f"/></svg>
<svg style="left:438.5px;top:146.0px" width="18" height="18" viewBox="0 0 18 18"><rect x="2.500" y="2" width="13" height="11.500" fill="#ececec" stroke="#8f8f8f" stroke-width="1.2" stroke-linejoin="round" stroke-linecap="round"/><path d="M9 2V13.500M2.500 7.700H15.500" fill="none" stroke="#8f8f8f" stroke-width="1" stroke-linejoin="round" stroke-linecap="round"/><path d="M1.500 14.500H16.500V16.500H1.500Z" fill="#ececec" stroke="#8f8f8f" stroke-width="1" stroke-linejoin="round" stroke-linecap="round"/></svg>
<svg style="left:461.0px;top:146.0px" width="18" height="18" viewBox="0 0 18 18"><path d="M2.500 6 L5.500 2 H16 V13 L13 17 H2.500Z" fill="#ececec" stroke="#8f8f8f" stroke-width="1.2" stroke-linejoin="round" stroke-linecap="round"/><path d="M2.500 6 H10 V12 H2.500 M10 6 L12 3 M13 6 V17 M13 6 L16 2" fill="none" stroke="#8f8f8f" stroke-width="1" stroke-linejoin="round" stroke-linecap="round"/></svg>
<svg style="left:486.5px;top:153.5px" width="6" height="4"><path d="M0 0H6L3 3.500Z" fill="#333"/></svg>
<svg style="left:499.0px;top:146.0px" width="18" height="18" viewBox="0 0 18 18"><rect x="5.500" y="1.500" width="7" height="15.500" rx="3.500" fill="#ececec" stroke="#8f8f8f" stroke-width="1.2" stroke-linejoin="round" stroke-linecap="round"/><path d="M9 5V14" stroke="#cfcfcf" stroke-width="2"/></svg>
<svg style="left:522.0px;top:153.5px" width="6" height="4"><path d="M0 0H6L3 3.500Z" fill="#333"/></svg>
<svg style="left:535.0px;top:146.0px" width="18" height="18" viewBox="0 0 18 18"><rect x="2" y="2" width="14" height="14" fill="#ececec" stroke="#8f8f8f" stroke-width="1.2" stroke-linejoin="round" stroke-linecap="round"/><path d="M9 2V16M2 7H16M2 11.500H16" fill="none" stroke="#8f8f8f" stroke-width="1" stroke-linejoin="round" stroke-linecap="round"/></svg>
<svg style="left:558.0px;top:153.5px" width="6" height="4"><path d="M0 0H6L3 3.500Z" fill="#333"/></svg>
<svg style="left:571.0px;top:146.0px" width="18" height="18" viewBox="0 0 18 18"><path d="M2 6 L6 2 H16.500 V12 L12.500 16.500 H2Z" fill="#ececec" stroke="#8f8f8f" stroke-width="1.1" stroke-linejoin="round" stroke-linecap="round"/><path d="M2 13.500 L6 10 H16.500 M2 13.500 H12.500 L16.500 10 M6 2 V10" fill="none" stroke="#8f8f8f" stroke-width="1" stroke-linejoin="round" stroke-linecap="round"/><path d="M2 13.500H12.500V16.500H2Z" fill="#d4d4d4" stroke="#8f8f8f" stroke-width=".8"/></svg>
<svg style="left:594.5px;top:153.5px" width="6" height="4"><path d="M0 0H6L3 3.500Z" fill="#333"/></svg>
<svg style="left:607.0px;top:146.0px" width="18" height="18" viewBox="0 0 18 18"><path d="M1.500 3H14M1.500 5H14M1.500 12H11" fill="none" stroke="#8f8f8f" stroke-width="1" stroke-linejoin="round" stroke-linecap="round"/><path d="M3 5V12M5.500 5V12M8 5V12M10.500 5V12M13 5V9" fill="none" stroke="#8f8f8f" stroke-width="1" stroke-linejoin="round" stroke-linecap="round"/><path d="M9 15 L15 8.500 L17 10.500 L11 17 L8.500 17.500Z" fill="#ececec" stroke="#8f8f8f" stroke-width="1" stroke-linejoin="round" stroke-linecap="round"/></svg>
<svg style="left:630.0px;top:153.5px" width="6" height="4"><path d="M0 0H6L3 3.500Z" fill="#333"/></svg>
<svg style="left:643.0px;top:146.0px" width="18" height="18" viewBox="0 0 18 18"><path d="M1.500 9 L6 5 L9 7.500 L13 4 L16.500 7 V11 L9 17 L1.500 12Z" fill="#ececec" stroke="#8f8f8f" stroke-width="1.2" stroke-linejoin="round" stroke-linecap="round"/><path d="M1.500 9 L9 14.500 L16.500 8 M6 5 V8 L9 10.500 V7.500 M9 10.500 L13 7.500" fill="none" stroke="#8f8f8f" stroke-width="1" stroke-linejoin="round" stroke-linecap="round"/></svg>
<svg style="left:667.0px;top:146.0px" width="18" height="18" viewBox="0 0 18 18"><circle cx="11" cy="9.500" r="4.200" fill="#fff" stroke="#8f8f8f" stroke-width="1.1" stroke-linejoin="round" stroke-linecap="round"/><path d="M11 9.500 V5.300 A4.200 4.200 0 0 1 15.200 9.500Z M11 9.500 V13.700 A4.200 4.200 0 0 1 6.800 9.500Z" fill="#555"/><path d="M1.500 13 L6.500 9.500 H17" fill="none" stroke="#8f8f8f" stroke-width="1.1" stroke-linejoin="round" stroke-linecap="round"/></svg>
<svg style="left:691.0px;top:146.0px" width="18" height="18" viewBox="0 0 18 18"><path d="M3 4 H14.500 V13" fill="none" stroke="#b4b4b4" stroke-width="1.2" stroke-linejoin="round" stroke-linecap="round"/><path d="M3 4 L14.500 16" stroke="#b4b4b4" stroke-width="1" stroke-dasharray="1.500 1"/></svg>
<svg style="left:715.0px;top:146.0px" width="18" height="18" viewBox="0 0 18 18"><rect x="1.500" y="1.500" width="15" height="15" fill="#dedede" stroke="#707070" stroke-width="1.2" stroke-linejoin="round" stroke-linecap="round"/><path d="M5.500 5 V8 C5.500 11 8 13 12.500 13" fill="none" stroke="#707070" stroke-width="1.2" stroke-linejoin="round" stroke-linecap="round"/><rect x="4.500" y="3.500" width="2" height="2" fill="#fff" stroke="#707070" stroke-width="0.9" stroke-linejoin="round" stroke-linecap="round"/><rect x="11.500" y="12" width="2" height="2" fill="#fff" stroke="#707070" stroke-width="0.9" stroke-linejoin="round" stroke-linecap="round"/><rect x="4.500" y="12" width="2" height="2" fill="#fff" stroke="#707070" stroke-width="0.9" stroke-linejoin="round" stroke-linecap="round"/></svg>
<svg style="left:739.0px;top:146.0px" width="18" height="18" viewBox="0 0 18 18"><rect x="3.500" y="3.500" width="11" height="11" fill="#bdbdbd" stroke="#8f8f8f" stroke-width="1"/><path d="M3.500 8 L8 3.500 M3.500 12 L12 3.500 M6 14.500 L14.500 6 M10 14.500 L14.500 10" stroke="#e6e6e6" stroke-width=".8"/><path d="M1 3.500H17M1 14.500H17M3.500 1V17M14.500 1V17" fill="none" stroke="#858585" stroke-width="1" stroke-linejoin="round" stroke-linecap="round"/></svg>
<svg style="left:762.0px;top:153.5px" width="6" height="4"><path d="M0 0H6L3 3.500Z" fill="#333"/></svg>
<svg style="left:775.0px;top:146.0px" width="18" height="18" viewBox="0 0 18 18"><path d="M2 2 H16 V16 H11 V7.500 H2Z" fill="#c8c8c8" stroke="#8f8f8f" stroke-width="1.2" stroke-linejoin="round" stroke-linecap="round"/><path d="M2 12 H8 V16 H2Z" fill="#ececec" stroke="#8f8f8f" stroke-width="1" stroke-linejoin="round" stroke-linecap="round"/><path d="M12 3 L15 6 M12 8 L15 11 M12 12 L15 15 M4 3 L7 6 M8 3 L10.500 5.500" stroke="#f0f0f0" stroke-width=".8"/></svg>
<svg style="left:798.0px;top:153.5px" width="6" height="4"><path d="M0 0H6L3 3.500Z" fill="#333"/></svg>
<svg style="left:811.0px;top:146.0px" width="18" height="18" viewBox="0 0 18 18"><path d="M8 4 L12 2 L16 4 V9.500 L12 12 L8 9.500Z" fill="#ececec" stroke="#8f8f8f" stroke-width="1.1" stroke-linejoin="round" stroke-linecap="round"/><path d="M11.700 5 L12.500 4.500 V9.500" fill="none" stroke="#8f8f8f" stroke-width="1" stroke-linejoin="round" stroke-linecap="round"/><path d="M8 7 L4 8 V13 M8 9.500 L6 10.500" fill="none" stroke="#8f8f8f" stroke-width="1.1" stroke-linejoin="round" stroke-linecap="round"/><circle cx="4" cy="14.500" r="1.500" fill="none" stroke="#8f8f8f" stroke-width="1" stroke-linejoin="round" stroke-linecap="round"/><circle cx="2" cy="9" r="1.200" fill="none" stroke="#8f8f8f" stroke-width="0.9" stroke-linejoin="round" stroke-linecap="round"/></svg>
<svg style="left:835.0px;top:146.0px" width="18" height="18" viewBox="0 0 18 18"><path d="M1.500 14.500 L3 12 H6.500 V9 H10 V6 H13.500 V3.500 L16.500 2 V5.500 L14 9 L10 12 L6 15 L2 16.500Z" fill="#ececec" stroke="#8f8f8f" stroke-width="1.1" stroke-linejoin="round" stroke-linecap="round"/></svg>
<svg style="left:858.0px;top:146.0px" width="18" height="18" viewBox="0 0 18 18"><circle cx="9" cy="9" r="5" fill="#fff" stroke="#666" stroke-width="1.2" stroke-linejoin="round" stroke-linecap="round"/><path d="M9 9 V4 A5 5 0 0 1 14 9Z M9 9 V14 A5 5 0 0 1 4 9Z" fill="#555"/><path d="M1.500 9H16.500M9 1.500V16.500" fill="none" stroke="#666" stroke-width="1.2" stroke-linejoin="round" stroke-linecap="round"/></svg>
<svg style="left:882.0px;top:146.0px" width="18" height="18" viewBox="0 0 18 18"><rect x="1.500" y="4" width="15" height="3" fill="#ececec" stroke="#8f8f8f" stroke-width="1" stroke-linejoin="round" stroke-linecap="round"/><rect x="1.500" y="11" width="15" height="3" fill="#ececec" stroke="#8f8f8f" stroke-width="1" stroke-linejoin="round" stroke-linecap="round"/><path d="M4 7V11M7 7V11M10 7V11M13 7V11" fill="none" stroke="#8f8f8f" stroke-width="1.1" stroke-linejoin="round" stroke-linecap="round"/><path d="M12 9 H16.500 M15 7.800 L16.500 9 L15 10.200" fill="none" stroke="#8f8f8f" stroke-width="0.9" stroke-linejoin="round" stroke-linecap="round"/></svg>
<svg style="left:907.0px;top:146.0px" width="18" height="18" viewBox="0 0 18 18"><rect x="1.500" y="1.500" width="15" height="15" fill="#ececec" stroke="#8f8f8f" stroke-width="1.1" stroke-linejoin="round" stroke-linecap="round"/><path d="M4 16 C4 9 9 4 16 4 M7.500 16 C7.500 11 11 7.500 16 7.500 M11 16 C11 13 13 11 16 11" fill="none" stroke="#8f8f8f" stroke-width="1" stroke-linejoin="round" stroke-linecap="round"/></svg>
<svg style="left:931.0px;top:146.0px" width="18" height="18" viewBox="0 0 18 18"><path d="M9 1.500 L12.500 7 H11 L14 12 H4 L7 7 H5.500Z" fill="#d9d9d9" stroke="#8f8f8f" stroke-width="1.1" stroke-linejoin="round" stroke-linecap="round"/><path d="M9 12V16 M3 16.500H15" fill="none" stroke="#8f8f8f" stroke-width="1.2" stroke-linejoin="round" stroke-linecap="round"/></svg>
<svg style="left:955.0px;top:146.0px" width="18" height="18" viewBox="0 0 18 18"><rect x="1.500" y="4" width="15" height="10" fill="#f2f2f2" stroke="#8f8f8f" stroke-width="1.1" stroke-linejoin="round" stroke-linecap="round"/><path d="M4 4V7M6.500 4V6M9 4V7M11.500 4V6M14 4V7 M4 14V11M6.500 14V12M9 14V11M11.500 14V12M14 14V11" fill="none" stroke="#8f8f8f" stroke-width="0.9" stroke-linejoin="round" stroke-linecap="round"/></svg>
<svg style="left:979.0px;top:146.0px" width="18" height="18" viewBox="0 0 18 18"><rect x="1.500" y="1.500" width="15" height="15" fill="#ececec" stroke="#8f8f8f" stroke-width="1.1" stroke-linejoin="round" stroke-linecap="round"/><rect x="4.500" y="4.500" width="9" height="9" fill="none" stroke="#8f8f8f" stroke-width="1" stroke-linejoin="round" stroke-linecap="round"/><path d="M6.500 6.500H11.500V11.500H6.500Z" fill="none" stroke="#b4b4b4" stroke-width="0.8" stroke-linejoin="round" stroke-linecap="round"/></svg>
<svg style="left:1002.0px;top:146.0px" width="18" height="18" viewBox="0 0 18 18"><rect x="1.500" y="1.500" width="15" height="15" fill="#e6e6e6" stroke="#b4b4b4" stroke-width="1" stroke-linejoin="round" stroke-linecap="round"/><path d="M4 16 C4 9 9 4 16 4 M8 16 C8 11 11 8 16 8" fill="none" stroke="#b4b4b4" stroke-width="1" stroke-linejoin="round" stroke-linecap="round"/><path d="M9 13 L15 3 L17 4.500 L11 14.500Z" fill="#f0f0f0" stroke="#b4b4b4" stroke-width="1" stroke-linejoin="round" stroke-linecap="round"/></svg>
<svg style="left:1026.0px;top:146.0px" width="18" height="18" viewBox="0 0 18 18"><path d="M2 2H9V6H5V9H2Z M11 2H16V8H11Z M2 11H6V16H2Z M8 8 H16V16H8Z" fill="#e6e6e6" stroke="#b4b4b4" stroke-width="1" stroke-linejoin="round" stroke-linecap="round"/><path d="M8 16 C8 12 11 9 16 8" fill="none" stroke="#b4b4b4" stroke-width="1" stroke-linejoin="round" stroke-linecap="round"/></svg>
<svg style="left:1051.0px;top:146.0px" width="18" height="18" viewBox="0 0 18 18"><rect x="2" y="1.500" width="7" height="8" fill="#fff" stroke="#2a2f3a" stroke-width="1.1" stroke-linejoin="round" stroke-linecap="round"/><rect x="3.500" y="3" width="4" height="2.200" fill="#1a6fc4"/><path d="M3.500 7H7.500" stroke="#2a2f3a" stroke-width=".9"/><path d="M16.500 1.500 L10 9 L8 12.500 L11.500 11 Z" fill="#e0a040" stroke="#2a2f3a" stroke-width="1" stroke-linejoin="round" stroke-linecap="round"/><path d="M8 12.500 C6.500 13 6 15 3 16.500 C7 17 10 15.500 11.500 11Z" fill="#2a2f3a"/></svg>
<svg style="left:1075.0px;top:146.0px" width="18" height="18" viewBox="0 0 18 18"><rect x="6.500" y="1.500" width="10" height="9" fill="#ececec" stroke="#8f8f8f" stroke-width="1.1" stroke-linejoin="round" stroke-linecap="round"/><circle cx="6.500" cy="11.500" r="5" fill="#f6f6f6" stroke="#8f8f8f" stroke-width="1.1" stroke-linejoin="round" stroke-linecap="round"/></svg>
<svg style="left:1098.0px;top:153.5px" width="6" height="4"><path d="M0 0H6L3 3.500Z" fill="#333"/></svg>
<svg style="left:1111.0px;top:146.0px" width="18" height="18" viewBox="0 0 18 18"><rect x="6.500" y="1.500" width="10" height="10" fill="#dedede" stroke="#8f8f8f" stroke-width="1.1" stroke-linejoin="round" stroke-linecap="round"/><circle cx="6.500" cy="11" r="5" fill="none" stroke="#8f8f8f" stroke-width="1.1" stroke-linejoin="round" stroke-linecap="round"/></svg>
<svg style="left:1134.5px;top:153.5px" width="6" height="4"><path d="M0 0H6L3 3.500Z" fill="#333"/></svg>
<svg style="left:1147.0px;top:146.0px" width="18" height="18" viewBox="0 0 18 18"><path d="M2 2.500 L13 5 L16.500 3.500 V14 L13 16.500 L2 13Z" fill="#dcdcdc" stroke="#8f8f8f" stroke-width="1.1" stroke-linejoin="round" stroke-linecap="round"/><path d="M5 6.500 L11 8 V12.500 L5 11Z" fill="#f4f4f4" stroke="#8f8f8f" stroke-width="1" stroke-linejoin="round" stroke-linecap="round"/><path d="M13 5V16.500" fill="none" stroke="#8f8f8f" stroke-width="1" stroke-linejoin="round" stroke-linecap="round"/></svg>
<svg style="left:1171.0px;top:146.0px" width="18" height="18" viewBox="0 0 18 18"><circle cx="5" cy="4.500" r="3.200" fill="#ececec" stroke="#8f8f8f" stroke-width="1" stroke-linejoin="round" stroke-linecap="round"/><path d="M3 2.500L7 6.500M7 2.500L3 6.500" fill="none" stroke="#8f8f8f" stroke-width="0.9" stroke-linejoin="round" stroke-linecap="round"/><path d="M8 10.500 L10 8.500 H15.500 V14 L13.500 16.500 H8Z" fill="#cfcfcf" stroke="#8f8f8f" stroke-width="1.1" stroke-linejoin="round" stroke-linecap="round"/><path d="M11 2 H14.500 V6 M13 4.500 L14.500 6 L16 4.500" fill="none" stroke="#8f8f8f" stroke-width="1" stroke-linejoin="round" stroke-linecap="round"/></svg>
<svg style="left:1194.5px;top:153.5px" width="6" height="4"><path d="M0 0H6L3 3.500Z" fill="#333"/></svg>
<svg style="left:1206.5px;top:146.0px" width="18" height="18" viewBox="0 0 18 18"><path d="M2 2V16H16 M5 2V13H16 M8 5V10H16" fill="none" stroke="#8f8f8f" stroke-width="1" stroke-linejoin="round" stroke-linecap="round"/><path d="M9 9 L15 1.500 L17 3 L11 10.500 L8.500 11.500Z" fill="#ececec" stroke="#8f8f8f" stroke-width="1" stroke-linejoin="round" stroke-linecap="round"/></svg>
<svg style="left:1231.0px;top:146.0px" width="18" height="18" viewBox="0 0 18 18"><path d="M1.500 1V17" fill="none" stroke="#111" stroke-width="1.4" stroke-linejoin="round" stroke-linecap="round"/><rect x="4" y="3" width="7" height="4.500" fill="#fff" stroke="#1a6fc4" stroke-width="1.2" stroke-linejoin="round" stroke-linecap="round"/><rect x="4" y="10.500" width="12.500" height="4.500" fill="#fff" stroke="#1a6fc4" stroke-width="1.2" stroke-linejoin="round" stroke-linecap="round"/></svg>
<svg style="left:1255.0px;top:146.0px" width="18" height="18" viewBox="0 0 18 18"><path d="M1.500 13.500 H5.500 V7 C5.500 3 12.500 3 12.500 7 V10 H16.500" fill="none" stroke="#1a6fc4" stroke-width="1.4" stroke-linejoin="round" stroke-linecap="round"/><path d="M1.500 16.500 H16.500 V13.500 H9.500 V8 C9.500 7 8.500 7 8.500 8 V13.500" fill="none" stroke="#1a6fc4" stroke-width="1.2" stroke-linejoin="round" stroke-linecap="round"/></svg>
<svg style="left:1278.5px;top:146.0px" width="18" height="18" viewBox="0 0 18 18"><path d="M2 3.500 L6 5.500 V14.500 L2 16.500Z" fill="#fff" stroke="#2a2f3a" stroke-width="1.1" stroke-linejoin="round" stroke-linecap="round"/><path d="M8.500 1V17" fill="none" stroke="#2a2f3a" stroke-width="1.4" stroke-linejoin="round" stroke-linecap="round"/><path d="M15 3.500 L11 5.500 V14.500 L15 16.500Z" fill="#cfe3f7" stroke="#1a6fc4" stroke-width="1.1" stroke-linejoin="round" stroke-linecap="round"/><path d="M11 14 L16 8 L17.500 9.500 L12.500 15.500 L10.500 16.500Z" fill="#f3a64a" stroke="#c0661a" stroke-width="1" stroke-linejoin="round" stroke-linecap="round"/></svg>
<svg style="left:1302.0px;top:146.0px" width="18" height="18" viewBox="0 0 18 18"><rect x="1.500" y="6.500" width="15" height="5" rx="1" fill="#fff" stroke="#1a6fc4" stroke-width="1.3" stroke-linejoin="round" stroke-linecap="round"/><path d="M9 2V16" stroke="#d03030" stroke-width="1.300" stroke-dasharray="2 1.500"/><path d="M7.500 6.500V11.500M10.500 6.500V11.500" stroke="#d03030" stroke-width="1"/></svg>
<svg style="left:1327.0px;top:146.0px" width="18" height="18" viewBox="0 0 18 18"><path d="M9 1.500V16.500M1.500 9H16.500" fill="none" stroke="#2a2f3a" stroke-width="1.5" stroke-linejoin="round" stroke-linecap="round"/><path d="M6.500 4 L9 1.500 L11.500 4 M6.500 14 L9 16.500 L11.500 14 M4 6.500 L1.500 9 L4 11.500 M14 6.500 L16.500 9 L14 11.500" fill="none" stroke="#2a2f3a" stroke-width="1.5" stroke-linejoin="round" stroke-linecap="round"/></svg>
<svg style="left:1351.0px;top:146.0px" width="18" height="18" viewBox="0 0 18 18"><circle cx="5" cy="4.500" r="3" fill="#fff" stroke="#2a2f3a" stroke-width="1.3" stroke-linejoin="round" stroke-linecap="round"/><circle cx="10" cy="10.500" r="3" fill="#fff" stroke="#1a6fc4" stroke-width="1.3" stroke-linejoin="round" stroke-linecap="round"/><circle cx="13" cy="13.500" r="3" fill="#fff" stroke="#1a6fc4" stroke-width="1.3" stroke-linejoin="round" stroke-linecap="round"/><path d="M10 2.500 C13 2.500 15 4 15.500 6.500 M13.500 5.500 L15.500 7 L17 5" fill="none" stroke="#2a2f3a" stroke-width="1.2" stroke-linejoin="round" stroke-linecap="round"/></svg>
<svg style="left:1375.0px;top:146.0px" width="18" height="18" viewBox="0 0 18 18"><path d="M2 4.500H10M8 2.500L10 4.500L8 6.500" fill="none" stroke="#2a2f3a" stroke-width="1.3" stroke-linejoin="round" stroke-linecap="round"/><path d="M2 9.500H6" fill="none" stroke="#2a2f3a" stroke-width="1.3" stroke-linejoin="round" stroke-linecap="round"/><path d="M6.500 9.500 H12 M9 9.500 V17 M7.500 13 L9 11 L10.500 13" fill="none" stroke="#1a6fc4" stroke-width="1.3" stroke-linejoin="round" stroke-linecap="round"/><path d="M14.500 17V9 M13 11L14.500 9L16 11" fill="none" stroke="#2a2f3a" stroke-width="1.3" stroke-linejoin="round" stroke-linecap="round"/></svg>
<svg style="left:1398.5px;top:146.0px" width="18" height="18" viewBox="0 0 18 18"><path d="M2 4.500H12M10 2.500L12 4.500L10 6.500" fill="none" stroke="#2a2f3a" stroke-width="1.3" stroke-linejoin="round" stroke-linecap="round"/><path d="M2 9.500H10 M2 13.500H13" fill="none" stroke="#2a2f3a" stroke-width="1.3" stroke-linejoin="round" stroke-linecap="round"/><path d="M9 11.500H15" fill="none" stroke="#1a6fc4" stroke-width="1.3" stroke-linejoin="round" stroke-linecap="round"/><path d="M15.500 1.500V17" fill="none" stroke="#1a6fc4" stroke-width="1.4" stroke-linejoin="round" stroke-linecap="round"/></svg>
<svg style="left:1422.0px;top:146.0px" width="18" height="18" viewBox="0 0 18 18"><path d="M3 3.500H12M10 1.500L12 3.500L10 5.500" fill="none" stroke="#2a2f3a" stroke-width="1.3" stroke-linejoin="round" stroke-linecap="round"/><path d="M2 7.500H8M2 10.500H8M2 13.500H8M2 16.500H8" fill="none" stroke="#2a2f3a" stroke-width="1.2" stroke-linejoin="round" stroke-linecap="round"/><path d="M9 7.500H14M9 10.500H14M9 13.500H14" fill="none" stroke="#1a6fc4" stroke-width="1.3" stroke-linejoin="round" stroke-linecap="round"/><path d="M15.500 1.500V17" fill="none" stroke="#1a6fc4" stroke-width="1.4" stroke-linejoin="round" stroke-linecap="round"/></svg>
<svg style="left:1446.5px;top:146.0px" width="18" height="18" viewBox="0 0 18 18"><path d="M2 4H16M2 7.500H16" fill="none" stroke="#8f8f8f" stroke-width="1.2" stroke-linejoin="round" stroke-linecap="round"/><path d="M2 11H11" stroke="#8f8f8f" stroke-width="1.100" stroke-dasharray="1.500 1.200"/><path d="M13 10V14H11L14 17L17 14H15V10Z" fill="#dcdcdc" stroke="#8f8f8f" stroke-width="1" stroke-linejoin="round" stroke-linecap="round"/></svg>
<svg style="left:1471.0px;top:146.0px" width="18" height="18" viewBox="0 0 18 18"><path d="M3 3 L13 1.500 L15.500 4 V14 L13 16.500 L3 15Z" fill="#8f8f8f" stroke="#7a7a7a" stroke-width="1"/><path d="M6 6 L12 5 V12.500 L6 11.500Z" fill="#a8a8a8"/></svg>
<svg style="left:1495.0px;top:146.0px" width="18" height="18" viewBox="0 0 18 18"><rect x="2" y="2.500" width="14.500" height="13" fill="#9a9a9a"/><path d="M6.500 5 L13 9 L6.500 13Z" fill="#e6e6e6"/><circle cx="4" cy="6" r="1" fill="#e6e6e6"/><circle cx="4" cy="12" r="1" fill="#e6e6e6"/></svg>
<svg style="left:1519.0px;top:146.0px" width="18" height="18" viewBox="0 0 18 18"><rect x="1.500" y="2" width="15" height="14.500" fill="#e8e8e8"/><text x="9" y="7.500" font-size="5.500" text-anchor="middle" fill="#8a8a8a" font-family="Liberation Sans, sans-serif">ALIGN</text><path d="M3 14.500 C6 10 11 10 15.500 11.500 V14.500Z" fill="#b0b0b0"/></svg>
<svg style="left:1543.0px;top:146.0px" width="18" height="18" viewBox="0 0 18 18"><path d="M6 2.500 L16 10 V14.500 H4.500" fill="none" stroke="#707070" stroke-width="1.2" stroke-linejoin="round" stroke-linecap="round"/><path d="M4 3.500 L12.500 10.500" fill="none" stroke="#707070" stroke-width="1.1" stroke-linejoin="round" stroke-linecap="round"/><ellipse cx="4.200" cy="13" rx="2.500" ry="3" fill="#ececec" stroke="#707070" stroke-width="1.2" stroke-linejoin="round" stroke-linecap="round"/><path d="M4.200 10 H14" fill="none" stroke="#707070" stroke-width="1" stroke-linejoin="round" stroke-linecap="round"/></svg>
<svg style="left:1566.5px;top:146.0px" width="18" height="18" viewBox="0 0 18 18"><path d="M4 2.500H14" fill="none" stroke="#707070" stroke-width="1.5" stroke-linejoin="round" stroke-linecap="round"/><path d="M9 2.500V8" fill="none" stroke="#707070" stroke-width="1.2" stroke-linejoin="round" stroke-linecap="round"/><path d="M6.500 8 H11.500 V11 H14.500 V16.500 H11.500 V15 H6.500 V16.500 H3.500 V11 H6.500Z" fill="#ececec" stroke="#707070" stroke-width="1.1" stroke-linejoin="round" stroke-linecap="round"/></svg>
<svg style="left:1591.0px;top:146.0px" width="18" height="18" viewBox="0 0 18 18"><path d="M2 2 H7 C12 2 15 5 15 10 V16.500 H9.500 V10.500 C9.500 8.500 8.500 7.500 6.500 7.500 H2Z" fill="#ececec" stroke="#7d7d7d" stroke-width="1.2" stroke-linejoin="round" stroke-linecap="round"/><path d="M7 2V7.500M9.500 10.500H15" fill="none" stroke="#7d7d7d" stroke-width="1" stroke-linejoin="round" stroke-linecap="round"/></svg>
<svg style="left:1615.0px;top:146.0px" width="18" height="18" viewBox="0 0 18 18"><path d="M3 2 H6.500 V9 H15.500 C15.500 12 13.500 13.500 11 14 V16.500 H5.500 V13 C4 12 3 10.500 3 9Z" fill="#f2f2f2" stroke="#7d7d7d" stroke-width="1.2" stroke-linejoin="round" stroke-linecap="round"/><path d="M6.500 9 C6.500 11 9 11.500 15.500 9" fill="none" stroke="#7d7d7d" stroke-width="1" stroke-linejoin="round" stroke-linecap="round"/></svg>
<svg style="left:1638.5px;top:146.0px" width="18" height="18" viewBox="0 0 18 18"><path d="M9.500 9.500 C8 8 10.500 6.500 11.500 8.500 C12.500 11 9 13 7 11 C4.500 8 7.500 4 11 4.500 C15 5.500 15.500 11 12.500 14 C11 15.500 9 16 7 15.500" fill="none" stroke="#8f8f8f" stroke-width="1.3" stroke-linejoin="round" stroke-linecap="round"/></svg>
<svg style="left:1662.0px;top:146.0px" width="18" height="18" viewBox="0 0 18 18"><rect x="1.500" y="1.500" width="11.500" height="11.500" fill="none" stroke="#2a2f3a" stroke-width="1.200" stroke-dasharray="2 1.300"/><path d="M4 10.500 L6 7 L8 10.500Z" fill="#7fd07f" stroke="#2d8a2d" stroke-width="1" stroke-linejoin="round" stroke-linecap="round"/><rect x="8.500" y="4" width="3" height="3" fill="#7fd07f" stroke="#2d8a2d" stroke-width="1" stroke-linejoin="round" stroke-linecap="round"/><path d="M12.500 10V14H10.500L13.800 17.500L17 14H15V10Z" fill="#1a6fc4" stroke="#0d4f9a" stroke-width=".6"/></svg>
<svg style="left:1699.0px;top:153.5px" width="6" height="4"><path d="M0 0H6L3 3.500Z" fill="#333"/></svg>
<svg style="left:1725.0px;top:146.0px" width="18" height="18" viewBox="0 0 18 18"><rect x="5.500" y="1.500" width="11" height="10" fill="#dadada" stroke="#b4b4b4" stroke-width="1" stroke-linejoin="round" stroke-linecap="round"/><rect x="1.500" y="5.500" width="11" height="11" fill="#e6e6e6" stroke="#b4b4b4" stroke-width="1" stroke-linejoin="round" stroke-linecap="round"/><circle cx="12" cy="9" r="2" fill="none" stroke="#b4b4b4" stroke-width="0.9" stroke-linejoin="round" stroke-linecap="round"/></svg>
<svg style="left:1749.0px;top:146.0px" width="18" height="18" viewBox="0 0 18 18"><rect x="3.500" y="3.500" width="13" height="13" fill="#a2a2a2" stroke="#8a8a8a" stroke-width="1"/><path d="M5 15 L15 5 V15Z" fill="#d6d6d6"/><path d="M1 5.500 H9 M6.500 3 L9 5.500 L6.500 8" fill="none" stroke="#7a7a7a" stroke-width="1.3" stroke-linejoin="round" stroke-linecap="round"/></svg>
<svg style="left:1773.0px;top:146.0px" width="18" height="18" viewBox="0 0 18 18"><rect x="1.500" y="1.500" width="15" height="15" fill="#e6e6e6" stroke="#8f8f8f" stroke-width="1.1" stroke-linejoin="round" stroke-linecap="round"/><path d="M6 1.500V16.500 M1.500 6H16.500 M6 6L16.500 16.500M16.500 6L6 16.500" fill="none" stroke="#8f8f8f" stroke-width="1" stroke-linejoin="round" stroke-linecap="round"/></svg>
<svg style="left:1796.5px;top:153.5px" width="6" height="4"><path d="M0 0H6L3 3.500Z" fill="#333"/></svg>
<svg style="left:1808.5px;top:146.0px" width="18" height="18" viewBox="0 0 18 18"><path d="M3 2V16" fill="none" stroke="#8f8f8f" stroke-width="2.2" stroke-linejoin="round" stroke-linecap="round"/><rect x="4.500" y="7" width="12" height="3.500" fill="#ececec" stroke="#8f8f8f" stroke-width="1.1" stroke-linejoin="round" stroke-linecap="round"/></svg>
<svg style="left:1833.5px;top:146.0px" width="18" height="18" viewBox="0 0 18 18"><path d="M3.500 16.500 V6.500 H16.500 V11 H8 V16.500Z" fill="#ececec" stroke="#8f8f8f" stroke-width="1.2" stroke-linejoin="round" stroke-linecap="round"/><path d="M3 1 V5 M1 3 H5 M1.600 1.600 L4.400 4.400 M4.400 1.600 L1.600 4.400" fill="none" stroke="#8f8f8f" stroke-width="0.9" stroke-linejoin="round" stroke-linecap="round"/></svg>
<svg style="left:1856.5px;top:153.5px" width="6" height="4"><path d="M0 0H6L3 3.500Z" fill="#333"/></svg>
<svg style="left:1870.0px;top:146.0px" width="18" height="18" viewBox="0 0 18 18"><text x="11.500" y="14" font-size="17" text-anchor="middle" fill="#8f8f8f" font-family="Liberation Serif, serif">A</text><rect x="1" y="10" width="7" height="7.500" fill="#f4f4f4" stroke="#777" stroke-width="0.9" stroke-linejoin="round" stroke-linecap="round"/><path d="M2.500 12H6.500M2.500 14H6.500M2.500 16H6.500" stroke="#777" stroke-width=".7"/></svg>
<div style="left:107px;top:145px;width:1px;height:21px;background:#b9b9b9;"></div>
<div style="left:222px;top:145px;width:1px;height:21px;background:#b9b9b9;"></div>
<div style="left:314px;top:145px;width:1px;height:21px;background:#b9b9b9;"></div>
<svg style="left:1893px;top:149px" width="11" height="10"><path d="M0.500 1H10.500" stroke="#222" stroke-width="1.600"/><path d="M0.500 4H10.500L5.500 9.500Z" fill="#222"/></svg>
<div style="left:3px;top:195px;width:307px;height:818px;background:#f0f0f0;"></div>
<div style="left:4px;top:215px;width:304px;height:797px;background:#ffffff;"></div>
<div style="left:310px;top:195px;width:2px;height:818px;background:#c8c8c8;"></div>
<div style="left:312px;top:195px;width:306px;height:818px;background:#f0f0f0;"></div>
<div style="left:618px;top:195px;width:2px;height:818px;background:#c8c8c8;"></div>
<div id="t70" style="top:197.5px;line-height:16px;font-size:12px;color:#2a2a2a;white-space:nowrap;letter-spacing:0.034px;left:7.5px;"><span>Navegador de projeto -</span></div>
<div id="t71" style="top:197.5px;line-height:16px;font-size:12px;color:#2a2a2a;white-space:nowrap;letter-spacing:-0.652px;left:135.5px;"><span>INSTALAÇÕES DE INCÊNDI...</span></div>
<svg style="left:295px;top:201px" width="10" height="10"><path d="M1 1L9 9M9 1L1 9" stroke="#111" stroke-width="1.500"/></svg>
<div id="t72" style="top:197.5px;line-height:16px;font-size:12px;color:#2a2a2a;white-space:nowrap;letter-spacing:-0.116px;left:316.5px;"><span>Propriedades</span></div>
<svg style="left:603px;top:201px" width="10" height="10"><path d="M1 1L9 9M9 1L1 9" stroke="#111" stroke-width="1.500"/></svg>
<div style="left:44px;top:215px;width:75px;height:18px;background:#e5e5e5;"></div>
<div style="left:13px;top:229px;width:0;height:229px;border-left:1px dotted #9a9a9a;"></div>
<div style="left:33px;top:233px;width:0;height:117px;border-left:1px dotted #9a9a9a;"></div>
<div style="left:53px;top:265px;width:0;height:31px;border-left:1px dotted #9a9a9a;"></div>
<div style="left:18px;top:224px;width:7px;height:0;border-top:1px dotted #9a9a9a;"></div>
<svg style="left:9.0px;top:221.0px" width="9" height="9"><rect x=".5" y=".5" width="8" height="8" fill="#fff" stroke="#9a9a9a"/><path d="M2 4.500H7" stroke="#2f4f9f" stroke-width="1"/></svg>
<svg style="left:25px;top:216px" width="16" height="16" viewBox="0 0 16 16"><path d="M1 4.500V1H4.500M11.500 1H15V4.500M15 11.500V15H11.500M4.500 15H1V11.500" fill="none" stroke="#222" stroke-width="1.200"/><path d="M4.500 6 L6 4.500 H11.500 V10 L10 11.500 H4.500Z" fill="#e9ecf2" stroke="#222" stroke-width="1"/></svg>
<div id="t73" style="top:216.0px;line-height:16px;font-size:12px;color:#111;white-space:nowrap;letter-spacing:-0.261px;left:47.5px;"><span>Vistas (todas)</span></div>
<div style="left:38px;top:243px;width:10px;height:0;border-top:1px dotted #9a9a9a;"></div>
<svg style="left:29.0px;top:239.0px" width="9" height="9"><rect x=".5" y=".5" width="8" height="8" fill="#fff" stroke="#9a9a9a"/><path d="M2 4.500H7" stroke="#2f4f9f" stroke-width="1"/><path d="M4.500 2V7" stroke="#2f4f9f" stroke-width="1"/></svg>
<div id="t74" style="top:234.0px;line-height:16px;font-size:12px;color:#111;white-space:nowrap;letter-spacing:-0.204px;left:51px;"><span>Plantas de piso</span></div>
<div style="left:38px;top:261px;width:10px;height:0;border-top:1px dotted #9a9a9a;"></div>
<svg style="left:29.0px;top:257.0px" width="9" height="9"><rect x=".5" y=".5" width="8" height="8" fill="#fff" stroke="#9a9a9a"/><path d="M2 4.500H7" stroke="#2f4f9f" stroke-width="1"/></svg>
<div id="t75" style="top:252.0px;line-height:16px;font-size:12px;color:#111;white-space:nowrap;letter-spacing:-0.107px;left:51px;"><span>Plantas de forro</span></div>
<div style="left:54px;top:278px;width:14px;height:0;border-top:1px dotted #9a9a9a;"></div>
<div id="t76" style="top:270.0px;line-height:16px;font-size:12px;color:#111;white-space:nowrap;letter-spacing:-0.016px;left:71.5px;"><span>1°Pavimento</span></div>
<div style="left:54px;top:296px;width:14px;height:0;border-top:1px dotted #9a9a9a;"></div>
<div id="t77" style="top:288.0px;line-height:16px;font-size:12px;color:#111;white-space:nowrap;letter-spacing:-0.016px;left:71.5px;"><span>2°Pavimento</span></div>
<div style="left:38px;top:315px;width:10px;height:0;border-top:1px dotted #9a9a9a;"></div>
<svg style="left:29.0px;top:311.0px" width="9" height="9"><rect x=".5" y=".5" width="8" height="8" fill="#fff" stroke="#9a9a9a"/><path d="M2 4.500H7" stroke="#2f4f9f" stroke-width="1"/><path d="M4.500 2V7" stroke="#2f4f9f" stroke-width="1"/></svg>
<div id="t78" style="top:306.0px;line-height:16px;font-size:12px;color:#111;white-space:nowrap;letter-spacing:-0.293px;left:51px;"><span>Vistas 3D</span></div>
<div style="left:38px;top:333px;width:10px;height:0;border-top:1px dotted #9a9a9a;"></div>
<svg style="left:29.0px;top:329.0px" width="9" height="9"><rect x=".5" y=".5" width="8" height="8" fill="#fff" stroke="#9a9a9a"/><path d="M2 4.500H7" stroke="#2f4f9f" stroke-width="1"/><path d="M4.500 2V7" stroke="#2f4f9f" stroke-width="1"/></svg>
<div id="t79" style="top:324.0px;line-height:16px;font-size:12px;color:#111;white-space:nowrap;letter-spacing:-0.258px;left:51px;"><span>Elevações (Elevação da construção)</span></div>
<div style="left:38px;top:351px;width:10px;height:0;border-top:1px dotted #9a9a9a;"></div>
<svg style="left:29.0px;top:347.0px" width="9" height="9"><rect x=".5" y=".5" width="8" height="8" fill="#fff" stroke="#9a9a9a"/><path d="M2 4.500H7" stroke="#2f4f9f" stroke-width="1"/><path d="M4.500 2V7" stroke="#2f4f9f" stroke-width="1"/></svg>
<div id="t80" style="top:342.0px;line-height:16px;font-size:12px;color:#111;white-space:nowrap;letter-spacing:-0.169px;left:51px;"><span>Cortes (Corte da construção)</span></div>
<div style="left:14px;top:368px;width:11px;height:0;border-top:1px dotted #9a9a9a;"></div>
<svg style="left:25px;top:360px" width="16" height="16" viewBox="0 0 16 16"><rect x=".7" y="1" width="14.600" height="14" fill="#fff" stroke="#222" stroke-width="1.200"/><rect x=".7" y="1" width="14.600" height="3" fill="#555c6c"/><rect x="2.500" y="6" width="3.500" height="2.500" fill="#555c6c"/><rect x="2.500" y="10.500" width="3.500" height="2.500" fill="#555c6c"/><path d="M7.500 6.500H13.500M7.500 8.500H13.500M7.500 11H13.500M7.500 13H13.500" stroke="#555c6c" stroke-width=".9"/></svg>
<div id="t81" style="top:360.0px;line-height:16px;font-size:12px;color:#111;white-space:nowrap;letter-spacing:-0.340px;left:47.5px;"><span>Legendas</span></div>
<div style="left:18px;top:386px;width:7px;height:0;border-top:1px dotted #9a9a9a;"></div>
<svg style="left:9.0px;top:383.0px" width="9" height="9"><rect x=".5" y=".5" width="8" height="8" fill="#fff" stroke="#9a9a9a"/><path d="M2 4.500H7" stroke="#2f4f9f" stroke-width="1"/><path d="M4.500 2V7" stroke="#2f4f9f" stroke-width="1"/></svg>
<svg style="left:25px;top:378px" width="16" height="16" viewBox="0 0 16 16"><rect x=".7" y="2.700" width="14.600" height="10.800" fill="#fff" stroke="#222" stroke-width="1.200"/><rect x=".7" y="2.700" width="14.600" height="2.600" fill="#555c6c"/><path d="M.7 8H15.300M.7 10.800H15.300M5.500 5V13.500" stroke="#222" stroke-width=".9"/></svg>
<div id="t82" style="top:378.0px;line-height:16px;font-size:12px;color:#111;white-space:nowrap;letter-spacing:-0.127px;left:47.5px;"><span>Tabelas/Quantidades (todas)</span></div>
<div style="left:14px;top:404px;width:11px;height:0;border-top:1px dotted #9a9a9a;"></div>
<svg style="left:25px;top:396px" width="16" height="16" viewBox="0 0 16 16"><path d="M1 2 H11.500 L15 5.500 V14.500 H1Z" fill="#fff" stroke="#222" stroke-width="1.200"/><path d="M11.500 2V5.500H15" fill="none" stroke="#222" stroke-width="1"/><rect x="3" y="7.500" width="4.500" height="5" fill="none" stroke="#222" stroke-width=".9"/><path d="M9 8H13V12.500H9" fill="none" stroke="#222" stroke-width=".9"/><path d="M3 5H9" stroke="#222" stroke-width=".9"/></svg>
<div id="t83" style="top:396.0px;line-height:16px;font-size:12px;color:#111;white-space:nowrap;letter-spacing:-0.229px;left:47.5px;"><span>Folhas (todas)</span></div>
<div style="left:18px;top:422px;width:7px;height:0;border-top:1px dotted #9a9a9a;"></div>
<svg style="left:9.0px;top:419.0px" width="9" height="9"><rect x=".5" y=".5" width="8" height="8" fill="#fff" stroke="#9a9a9a"/><path d="M2 4.500H7" stroke="#2f4f9f" stroke-width="1"/><path d="M4.500 2V7" stroke="#2f4f9f" stroke-width="1"/></svg>
<svg style="left:25px;top:414px" width="16" height="16" viewBox="0 0 16 16"><path d="M1.500 1.500 H8 V8 H1.500Z" fill="#fff" stroke="#222" stroke-width="1.200"/><path d="M10.500 1.500 H14.500 V14.500 H1.500 V10.500 H10.500Z" fill="#e9ecf2" stroke="#222" stroke-width="1.200"/></svg>
<div id="t84" style="top:414.0px;line-height:16px;font-size:12px;color:#111;white-space:nowrap;letter-spacing:-0.418px;left:47.5px;"><span>Famílias</span></div>
<div style="left:18px;top:440px;width:7px;height:0;border-top:1px dotted #9a9a9a;"></div>
<svg style="left:9.0px;top:437.0px" width="9" height="9"><rect x=".5" y=".5" width="8" height="8" fill="#fff" stroke="#9a9a9a"/><path d="M2 4.500H7" stroke="#2f4f9f" stroke-width="1"/><path d="M4.500 2V7" stroke="#2f4f9f" stroke-width="1"/></svg>
<svg style="left:25px;top:432px" width="16" height="16" viewBox="0 0 16 16"><path d="M4.500 1H1.500V15H4.500M11.500 1H14.500V15H11.500" fill="none" stroke="#222" stroke-width="1.200"/><circle cx="7" cy="6.500" r="3.300" fill="#fff" stroke="#222" stroke-width="1"/><rect x="6.500" y="6.500" width="6" height="6" fill="#dfe3ea" stroke="#222" stroke-width="1"/></svg>
<div id="t85" style="top:432.0px;line-height:16px;font-size:12px;color:#111;white-space:nowrap;letter-spacing:-0.143px;left:47.5px;"><span>Grupos</span></div>
<div style="left:14px;top:458px;width:11px;height:0;border-top:1px dotted #9a9a9a;"></div>
<svg style="left:25px;top:450px" width="16" height="16" viewBox="0 0 16 16"><rect x=".8" y="5" width="8" height="6" rx="3" fill="none" stroke="#a87908" stroke-width="2"/><rect x="7.200" y="5" width="8" height="6" rx="3" fill="none" stroke="#a87908" stroke-width="2"/><rect x="1.300" y="5.500" width="7" height="5" rx="2.500" fill="none" stroke="#f2c230" stroke-width="1"/><rect x="7.700" y="5.500" width="7" height="5" rx="2.500" fill="none" stroke="#f2c230" stroke-width="1"/></svg>
<div id="t86" style="top:450.0px;line-height:16px;font-size:12px;color:#111;white-space:nowrap;letter-spacing:-0.111px;left:47.5px;"><span>Vínculos do Revit</span></div>
<div style="left:314px;top:215px;width:302px;height:71px;border:1px solid #dadada;box-sizing:border-box;"></div>
<div style="left:317px;top:218px;width:66px;height:66px;border:1px solid #cfcfcf;box-sizing:border-box;"></div>
<svg style="left:335px;top:237px" width="30" height="28" viewBox="0 0 30 28">
<path d="M9 9 H5 C2.500 9 1 10.500 1 13 V20 C1 22.500 2.500 24 5 24 H7.500 M15 9 H25 C27.500 9 29 10.500 29 13 V20 C29 22.500 27.500 24 25 24 H14" fill="none" stroke="#2f3644" stroke-width="1.300"/>
<path d="M5.500 21.500 L8.500 24 L5.500 26.500Z M16 21.500 L13 24 L16 26.500Z" fill="#2f3644"/>
<path d="M7.500 2 H14 V6.500 H16.500 V5.500 H18 V13 H16.500 V12 H14 V18 H7.500 V17 H6.500 V3 H7.500Z" fill="#eef0f5" stroke="#2f3644" stroke-width="1.200" stroke-linejoin="round"/>
<path d="M9 3.500V16.500" stroke="#b9bfcc" stroke-width="2"/>
</svg>
<div id="t87" style="top:236.0px;line-height:16px;font-size:12px;color:#222;white-space:nowrap;letter-spacing:-0.095px;left:387px;"><span>Sistema de tubulação</span></div>
<div id="t88" style="top:252.0px;line-height:16px;font-size:12px;color:#222;white-space:nowrap;letter-spacing:-0.047px;left:387px;"><span>Tubulação de Incêndio</span></div>
<svg style="left:606px;top:250px" width="8" height="4"><path d="M0 0H8L4 4Z" fill="#333"/></svg>
<div style="left:314px;top:288px;width:213px;height:23px;background:#cccccc;border:1px solid #bfbfbf;box-sizing:border-box;"></div>
<div id="t89" style="top:292.0px;line-height:16px;font-size:12px;color:#7a7a7a;white-space:nowrap;letter-spacing:-0.070px;left:318.5px;"><span>Tubulação de Incêndio 25</span></div>
<svg style="left:512px;top:296px" width="10" height="6"><path d="M1 1L5 5L9 1" fill="none" stroke="#9a9a9a" stroke-width="1"/></svg>
<svg style="left:533px;top:290px" width="17" height="17" viewBox="0 0 17 17">
<rect x="1" y="1" width="6" height="5" fill="none" stroke="#a0a0a0"/><rect x="9" y="1" width="6" height="5" fill="none" stroke="#a0a0a0"/><rect x="1" y="9" width="6" height="6" fill="none" stroke="#a0a0a0"/>
<rect x="9.500" y="8.500" width="6.500" height="7.500" fill="#f4f4f4" stroke="#8a8a8a"/><path d="M11 11H14.500M11 13H14.500" stroke="#8a8a8a" stroke-width=".8"/></svg>
<div id="t90" style="top:290.5px;line-height:16px;font-size:12px;color:#9a9a9a;white-space:nowrap;letter-spacing:-0.094px;left:554.5px;"><span>Editar tipo</span></div>
<div style="left:314px;top:312px;width:302px;height:17px;background:#dcdcdc;"></div>
<div id="t91" style="top:313.0px;line-height:16px;font-size:12px;color:#111;white-space:nowrap;letter-spacing:0.080px;left:316px;"><span>Mecânico</span></div>
<svg style="left:603px;top:316px" width="8" height="10"><path d="M1.200 4.300L4 1.500L6.800 4.300M1.200 8.300L4 5.500L6.800 8.300" fill="none" stroke="#111" stroke-width="1.400"/></svg>
<div id="t92" style="top:330.0px;line-height:16px;font-size:12px;color:#6a6a6a;white-space:nowrap;letter-spacing:-0.030px;left:322.5px;"><span>Número de elementos</span></div>
<div id="t93" style="top:330.0px;line-height:16px;font-size:12px;color:#6a6a6a;white-space:nowrap;letter-spacing:-1.000px;left:462.5px;"><span>14</span></div>
<div style="left:314px;top:347px;width:302px;height:0;border-top:1px dotted #9a9a9a;"></div>
<div id="t94" style="top:348.0px;line-height:16px;font-size:12px;color:#6a6a6a;white-space:nowrap;letter-spacing:-0.117px;left:322.5px;"><span>Equipamento de sistema</span></div>
<div style="left:314px;top:365px;width:302px;height:0;border-top:1px dotted #9a9a9a;"></div>
<div id="t95" style="top:366.0px;line-height:16px;font-size:12px;color:#111;white-space:nowrap;letter-spacing:-0.058px;left:322.5px;"><span>Nome do sistema</span></div>
<div id="t96" style="top:366.0px;line-height:16px;font-size:12px;color:#111;white-space:nowrap;letter-spacing:-0.111px;left:462.5px;"><span>Tubulação de Incêndio 25</span></div>
<div style="left:314px;top:383px;width:302px;height:0;border-top:1px dotted #9a9a9a;"></div>
<div id="t97" style="top:384.0px;line-height:16px;font-size:12px;color:#6a6a6a;white-space:nowrap;letter-spacing:0.161px;left:322.5px;"><span>Volume</span></div>
<div id="t98" style="top:384.0px;line-height:16px;font-size:12px;color:#6a6a6a;white-space:nowrap;letter-spacing:-0.650px;left:462.5px;"><span>219.4 L</span></div>
<div style="left:314px;top:401px;width:302px;height:0;border-top:1px dotted #9a9a9a;"></div>
<div id="t99" style="top:402.0px;line-height:16px;font-size:12px;color:#6a6a6a;white-space:nowrap;letter-spacing:-0.389px;left:322.5px;"><span>Pressão estática</span></div>
<div id="t100" style="top:402.0px;line-height:16px;font-size:12px;color:#6a6a6a;white-space:nowrap;letter-spacing:-0.545px;left:462.5px;"><span>9.56011 kPa</span></div>
<div style="left:314px;top:419px;width:302px;height:0;border-top:1px dotted #9a9a9a;"></div>
<div style="left:314px;top:420px;width:302px;height:17px;background:#dcdcdc;"></div>
<div id="t101" style="top:421.0px;line-height:16px;font-size:12px;color:#111;white-space:nowrap;letter-spacing:0.008px;left:316px;"><span>Mecânico - Fluxo</span></div>
<svg style="left:603px;top:424px" width="8" height="10"><path d="M1.200 4.300L4 1.500L6.800 4.300M1.200 8.300L4 5.500L6.800 8.300" fill="none" stroke="#111" stroke-width="1.400"/></svg>
<div id="t102" style="top:438.0px;line-height:16px;font-size:12px;color:#6a6a6a;white-space:nowrap;letter-spacing:-0.169px;left:322.5px;"><span>Fluxo</span></div>
<div id="t103" style="top:438.0px;line-height:16px;font-size:12px;color:#6a6a6a;white-space:nowrap;letter-spacing:-0.158px;left:462.5px;"><span>300.00 L/min</span></div>
<div style="left:314px;top:455px;width:302px;height:0;border-top:1px dotted #9a9a9a;"></div>
<div style="left:314px;top:456px;width:302px;height:17px;background:#dcdcdc;"></div>
<div id="t104" style="top:457.0px;line-height:16px;font-size:12px;color:#111;white-space:nowrap;letter-spacing:-0.110px;left:316px;"><span>Dados de identidade</span></div>
<svg style="left:603px;top:460px" width="8" height="10"><path d="M1.200 4.300L4 1.500L6.800 4.300M1.200 8.300L4 5.500L6.800 8.300" fill="none" stroke="#111" stroke-width="1.400"/></svg>
<div id="t105" style="top:474.0px;line-height:16px;font-size:12px;color:#111;white-space:nowrap;letter-spacing:0.023px;left:322.5px;"><span>Imagem</span></div>
<div style="left:314px;top:491px;width:302px;height:0;border-top:1px dotted #9a9a9a;"></div>
<div id="t106" style="top:492.0px;line-height:16px;font-size:12px;color:#111;white-space:nowrap;letter-spacing:-0.048px;left:322.5px;"><span>Comentários</span></div>
<div style="left:314px;top:509px;width:302px;height:0;border-top:1px dotted #9a9a9a;"></div>
<div style="left:459px;top:330px;width:0;height:89px;border-left:1px dotted #9a9a9a;"></div>
<div style="left:603px;top:330px;width:0;height:89px;border-left:1px dotted #9a9a9a;"></div>
<div style="left:615px;top:330px;width:0;height:89px;border-left:1px dotted #9a9a9a;"></div>
<div style="left:459px;top:438px;width:0;height:17px;border-left:1px dotted #9a9a9a;"></div>
<div style="left:603px;top:438px;width:0;height:17px;border-left:1px dotted #9a9a9a;"></div>
<div style="left:615px;top:438px;width:0;height:17px;border-left:1px dotted #9a9a9a;"></div>
<div style="left:459px;top:474px;width:0;height:35px;border-left:1px dotted #9a9a9a;"></div>
<div style="left:603px;top:474px;width:0;height:35px;border-left:1px dotted #9a9a9a;"></div>
<div style="left:615px;top:474px;width:0;height:35px;border-left:1px dotted #9a9a9a;"></div>
<div id="t107" style="top:990.0px;line-height:16px;font-size:12px;color:#1a63c8;white-space:nowrap;letter-spacing:-0.084px;left:316px;text-decoration:underline;"><span>Ajuda de propriedades</span></div>
<div style="left:541px;top:988px;width:73px;height:21px;background:#cfcfcf;border:1px solid #bdbdbd;box-sizing:border-box;"></div>
<div id="t108" style="top:990.5px;line-height:16px;font-size:12px;color:#8c8c8c;white-space:nowrap;letter-spacing:0.045px;left:427.52px;width:300px;text-align:center;"><span>Aplicar</span></div>
<div style="left:620px;top:215px;width:1298px;height:779px;background:#ffffff;"></div>
<div style="left:1900px;top:217px;width:16px;height:777px;background:#f0f0f0;"></div>
<svg style="left:1903px;top:222px" width="9" height="7"><path d="M1 6L4.500 2L8 6" fill="none" stroke="#444" stroke-width="1.700"/></svg>
<svg style="left:1902px;top:982px" width="9" height="7"><path d="M1 1L4.500 5L8 1" fill="none" stroke="#444" stroke-width="1.700"/></svg>
<div style="left:1900px;top:597px;width:15px;height:17px;background:#cdcdcd;"></div>
<svg style="left:1903px;top:201px" width="10" height="9"><path d="M0.500 1H9.500" stroke="#222" stroke-width="1.400"/><path d="M0.500 4H9.500L5 8.500Z" fill="#222"/></svg>
<div style="left:620px;top:994px;width:1298px;height:19px;background:#f0f0f0;"></div>
<div id="t109" style="top:995.0px;line-height:16px;font-size:12px;color:#111;white-space:nowrap;letter-spacing:-0.422px;left:649px;"><span>1 : 50</span></div>
<div style="left:1437px;top:995px;width:17px;height:16px;background:#cdcdcd;"></div>
<svg style="left:997px;top:998px" width="7" height="9"><path d="M6 1L2 4.500L6 8" fill="none" stroke="#333" stroke-width="1.700"/></svg>
<svg style="left:1887px;top:998px" width="7" height="9"><path d="M1 1L5 4.500L1 8" fill="none" stroke="#333" stroke-width="1.700"/></svg>
<svg style="left:1902px;top:998px" width="12" height="12"><path d="M10 3V4M10 6V7M7 6V7M10 9V10M7 9V10M4 9V10" stroke="#aaa" stroke-width="2"/></svg>
<svg style="left:700.0px;top:995.0px" width="18" height="16" viewBox="0 0 18 16"><rect x="1.500" y="2" width="15" height="11" fill="#fff" stroke="#222" stroke-width="1.200"/><path d="M3 4H15M3 6H15M3 8H15M3 10H15" stroke="#222" stroke-width="1" stroke-dasharray="1 1"/><path d="M4 5H16M4 7H16M4 9H16M4 11H16" stroke="#222" stroke-width="1" stroke-dasharray="1 1" stroke-dashoffset="1"/></svg>
<svg style="left:721.5px;top:995.0px" width="18" height="16" viewBox="0 0 18 16"><path d="M2 6 L5.500 2.500 H16 V10.500 L12.500 14 H2Z" fill="#a9cdf0" stroke="#1565c0" stroke-width="1.300" stroke-linejoin="round"/><path d="M2 6H12.500V14M12.500 6L16 2.500" fill="none" stroke="#1565c0" stroke-width="1.100"/></svg>
<svg style="left:741.0px;top:995.0px" width="18" height="16" viewBox="0 0 18 16"><circle cx="7" cy="7" r="3.500" fill="#ffd84a" stroke="#c98a10" stroke-width="1"/><path d="M7 0.500V2.500M7 11.500V13.500M0.500 7H2.500M2.300 2.300L3.700 3.700M11.700 2.300L10.300 3.700M2.300 11.700L3.700 10.300" stroke="#c98a10" stroke-width="1.100"/><path d="M10.500 9.500L16 15M16 9.500L10.500 15" stroke="#d61f26" stroke-width="2"/></svg>
<svg style="left:763.0px;top:995.0px" width="18" height="16" viewBox="0 0 18 16"><circle cx="7" cy="6" r="4.500" fill="#e4eefa" stroke="#2a6fc0" stroke-width="1.200"/><path d="M2 13.500H9" stroke="#333" stroke-width="1.400"/><path d="M10.500 9.500L16 15M16 9.500L10.500 15" stroke="#d61f26" stroke-width="2"/></svg>
<svg style="left:783.5px;top:995.0px" width="18" height="16" viewBox="0 0 18 16"><path d="M1.500 3L4 5.500M5 3H11L13 5V9H5Z" fill="none" stroke="#bdbdbd" stroke-width="1.100" stroke-dasharray="2 1"/><circle cx="13.500" cy="9" r="3" fill="#f4f4f4" stroke="#b5b5b5" stroke-width="1"/><rect x="12.300" y="12" width="2.400" height="2.500" fill="#b5b5b5"/></svg>
<svg style="left:804.0px;top:995.0px" width="18" height="16" viewBox="0 0 18 16"><path d="M3 12V4.500H13V8" fill="none" stroke="#1565c0" stroke-width="1.600"/><path d="M0.500 9.500H5" stroke="#1b2a4a" stroke-width="1.600"/><path d="M8 1.500H12" stroke="#333" stroke-width="1.200"/><path d="M6 8.500H9" stroke="#d61f26" stroke-width="1.200"/><path d="M10.500 9.500L16 15M16 9.500L10.500 15" stroke="#d61f26" stroke-width="2"/></svg>
<svg style="left:825.0px;top:995.0px" width="18" height="16" viewBox="0 0 18 16"><path d="M3 12V4.500H10.500" fill="none" stroke="#1565c0" stroke-width="1.600"/><path d="M0.500 9.500H5" stroke="#1b2a4a" stroke-width="1.600"/><path d="M6 8H9M6 10.500H9" stroke="#d61f26" stroke-width="1.100"/><circle cx="13.500" cy="7" r="3.200" fill="#d6e8fb" stroke="#1565c0" stroke-width="1.100"/><rect x="12.300" y="10.500" width="2.400" height="3" fill="#445"/></svg>
<svg style="left:846.0px;top:995.0px" width="18" height="16" viewBox="0 0 18 16"><path d="M1.500 7.500 L8 1.500 L15.500 6 V13.500 H3 V7.500" fill="#fff" stroke="#222" stroke-width="1.300" stroke-linejoin="round"/><path d="M5 13.500V8.500H8V13.500" fill="none" stroke="#222" stroke-width="1"/><rect x="10" y="10.500" width="6" height="4.500" fill="#3e8f6a" stroke="#1f5c40" stroke-width=".8"/><path d="M11.500 10.500V8.500C11.500 7 14.500 7 14.500 8.500" fill="none" stroke="#1f5c40" stroke-width="1"/></svg>
<svg style="left:867.0px;top:995.0px" width="18" height="16" viewBox="0 0 18 16"><path d="M1 5 L5.500 9.500 C5.500 13.500 11 13.500 11 9.500 C11 13 16.500 12.500 16 8.500 L13 4" fill="none" stroke="#222" stroke-width="1.200"/><ellipse cx="8.300" cy="10" rx="2.600" ry="2.300" fill="#fff" stroke="#222" stroke-width="1"/><ellipse cx="13.500" cy="8.500" rx="2.400" ry="2.200" fill="#fff" stroke="#222" stroke-width="1"/></svg>
<svg style="left:887.5px;top:995.0px" width="18" height="16" viewBox="0 0 18 16"><circle cx="9" cy="6.500" r="3.300" fill="#d6e8fb" stroke="#1565c0" stroke-width="1.200"/><rect x="7.800" y="10" width="2.400" height="3.500" fill="#1b3a7a"/></svg>
<svg style="left:908.5px;top:995.0px" width="18" height="16" viewBox="0 0 18 16"><rect x="2" y="4" width="10" height="8" fill="none" stroke="#bdbdbd" stroke-width="1.100" stroke-dasharray="2 1"/><path d="M4 1.500V4M9 1.500V4M4 12V14.500" stroke="#bdbdbd" stroke-width="1"/><rect x="9.500" y="7.500" width="6.500" height="6" fill="#f4f4f4" stroke="#b5b5b5"/><circle cx="12.700" cy="10.500" r="1.500" fill="none" stroke="#b5b5b5"/></svg>
<svg style="left:929.5px;top:995.0px" width="18" height="16" viewBox="0 0 18 16"><path d="M1.500 13V7L6 3H13.500V8" fill="none" stroke="#b5b5b5" stroke-width="1.200"/><path d="M4 13V7M6.500 13V7M9 13V7M1.500 7H10" stroke="#b5b5b5" stroke-width="1"/><circle cx="13.500" cy="9" r="2.800" fill="#f4f4f4" stroke="#b5b5b5"/><rect x="12.400" y="12" width="2.200" height="2.500" fill="#b5b5b5"/></svg>
<svg style="left:951.0px;top:995.0px" width="18" height="16" viewBox="0 0 18 16"><path d="M2 7L5 4H13V10L10 13H2Z" fill="#f4f4f4" stroke="#b5b5b5" stroke-width="1.200"/><path d="M2 7H10V13M10 7L13 4" fill="none" stroke="#b5b5b5"/><path d="M15 3V14" stroke="#b5b5b5" stroke-width="1.400"/></svg>
<svg style="left:972.0px;top:995.0px" width="18" height="16" viewBox="0 0 18 16"><path d="M2 2.500H16M2 1V4.500M16 1V4.500" stroke="#222" stroke-width="1.200"/><path d="M2 5V14M2 11H9" stroke="#222" stroke-width="1" stroke-dasharray="2 1.200"/><rect x="9.500" y="9.500" width="7" height="5" fill="#555" stroke="#222" stroke-width=".8"/><path d="M11 9.500V8C11 6.500 15 6.500 15 8V9.500" fill="none" stroke="#222" stroke-width="1.100"/></svg>
<div style="left:620px;top:196px;width:188px;height:94px;background:#eeeeee;border:1px solid #d9d9d9;box-sizing:border-box;border-top:none;border-left:none;"></div>
<div style="left:621px;top:271px;width:186px;height:18px;background:#fdf4e0;"></div>
<div style="left:624px;top:198px;width:67px;height:72px;border:1px solid #1f6fd8;box-sizing:border-box;background:linear-gradient(#bcd8f4,#aed0f0);"></div>
<div style="left:696px;top:198px;width:1px;height:72px;background:#d2d2d2;"></div>
<div id="t110" style="top:236.0px;line-height:16px;font-size:12px;color:#1a1a1a;white-space:nowrap;letter-spacing:-0.095px;left:507.45px;width:300px;text-align:center;"><span>Inspecionar</span></div>
<div id="t111" style="top:236.0px;line-height:16px;font-size:12px;color:#1a1a1a;white-space:nowrap;letter-spacing:0.061px;left:577.53px;width:300px;text-align:center;"><span>Concluir</span></div>
<div id="t112" style="top:236.0px;line-height:16px;font-size:12px;color:#1a1a1a;white-space:nowrap;letter-spacing:-0.316px;left:629.34px;width:300px;text-align:center;"><span>Cancelar</span></div>
<div id="t113" style="top:272.0px;line-height:16px;font-size:12px;color:#1a1a1a;white-space:nowrap;letter-spacing:-0.117px;left:564.44px;width:300px;text-align:center;"><span>Inspetor do sistema</span></div>
<svg style="left:641px;top:200px" width="32" height="32" viewBox="0 0 32 32">
<defs><linearGradient id="pg" x1="0" y1="0" x2="1" y2="0"><stop offset="0" stop-color="#9a9da4"/><stop offset=".45" stop-color="#f4f5f7"/><stop offset="1" stop-color="#8b8e96"/></linearGradient>
<linearGradient id="pg2" x1="0" y1="0" x2="0" y2="1"><stop offset="0" stop-color="#f4f5f7"/><stop offset=".5" stop-color="#d4d6db"/><stop offset="1" stop-color="#8b8e96"/></linearGradient></defs>
<path d="M3 3 H17 V10 H3Z" fill="url(#pg2)" stroke="#5c6068" stroke-width=".8"/>
<path d="M17 2.500 H21 C26 2.500 29.500 6 29.500 11 V15 H21.500 V12 C21.500 11 21 10.500 20 10.500 H17Z" fill="url(#pg2)" stroke="#5c6068" stroke-width=".8"/>
<rect x="15.500" y="1.500" width="2.500" height="10" fill="#e9eaee" stroke="#5c6068" stroke-width=".8"/>
<rect x="22" y="16.500" width="7" height="11.500" fill="url(#pg)" stroke="#5c6068" stroke-width=".8"/>
<rect x="20.800" y="14.500" width="9.400" height="2.500" fill="#e9eaee" stroke="#5c6068" stroke-width=".8"/>
<path d="M16 21 L23 28.500" stroke="#3a3d44" stroke-width="3" stroke-linecap="round"/>
<circle cx="10" cy="16" r="7.800" fill="#f2f6f9" stroke="#7d828c" stroke-width="1.600"/>
<circle cx="10" cy="16" r="6.300" fill="#e3ecef"/>
<rect x="8.600" y="14.800" width="2.800" height="6" fill="#222"/><rect x="8.600" y="10.800" width="2.800" height="2.600" fill="#222"/>
</svg>
<svg style="left:716px;top:206px" width="23" height="20" viewBox="0 0 23 20"><path d="M1 10.500 L4.500 7.500 L8 12.500 L19.500 1 L22 3.500 L8 19Z" fill="#7fb35a" stroke="#4c8a2a" stroke-width="1" stroke-linejoin="round"/></svg>
<svg style="left:768px;top:206px" width="22" height="22" viewBox="0 0 22 22"><path d="M3.500 1 L11 8 L18.500 1 L21 3.500 L14 11 L21 18.500 L18.500 21 L11 14 L3.500 21 L1 18.500 L8 11 L1 3.500Z" fill="#f58a84" stroke="#d8423a" stroke-width="1" stroke-linejoin="round"/></svg>
<svg style="left:0;top:0" width="1920" height="1040" viewBox="0 0 1920 1040"><path d="M836 438 L1029 377 L1235 510 L1235 520.500 L1041.500 581.500 L836 448.500Z" fill="#d8d8d8" stroke="#ababab" stroke-width="1"/><path d="M836 438 L1029 377 L1235 510 L1041.500 571Z" fill="#d5d5d5" stroke="#ababab" stroke-width="1"/><path d="M1041.500 571 V581.500" stroke="#8e8e8e" stroke-width="1"/><path d="M948.500 284 V429 A68 30.500 0 0 0 1084.500 429 V284Z" fill="#ff041b" fill-opacity=".51"/><ellipse cx="1016.500" cy="429" rx="68" ry="30.500" fill="none" stroke="#1a0000" stroke-width="1.200"/><path d="M948.500 284 V429 M1084.500 284 V429" stroke="#1a0000" stroke-width="1.300"/><ellipse cx="1016.500" cy="283.800" rx="68" ry="30.700" fill="#ffb2b9" stroke="#1a0000" stroke-width="1.500"/><path d="M967.500 263 L977.500 268.500" stroke="#c4878f" stroke-width="2.200"/><path d="M1042 436 L1053 442.500" stroke="#f0808c" stroke-width="3.400" stroke-linecap="round"/><path d="M1042 436 L1053 442.500" stroke="#ff99a3" stroke-width="2" stroke-linecap="round"/><circle cx="1056" cy="444.300" r="3.200" fill="#b4b4b4"/><path d="M1003 478.5L1042 464.8" stroke="#1a0000" stroke-width="2.8" stroke-linecap="butt"/><path d="M1003 478.5L1042 464.8" stroke="#fe081c" stroke-width="1.0" stroke-linecap="butt"/><path d="M1022 467.500 a3 2 -20 1 1 5 -1.500 M1036 464 l3 -1.500" fill="none" stroke="#b4b4b4" stroke-width="1.500"/><path d="M1042 464.8L1096 447.8" stroke="#1a0000" stroke-width="5.3" stroke-linecap="butt"/><path d="M1042 464.8L1096 447.8" stroke="#fe081c" stroke-width="3.0" stroke-linecap="butt"/><rect x="1040.500" y="462.500" width="3.500" height="3.500" fill="#111"/><path d="M1003.5 468L1003.5 518.5" stroke="#1a0000" stroke-width="3.2" stroke-linecap="butt"/><path d="M1003.5 468L1003.5 518.5" stroke="#fe081c" stroke-width="1.4" stroke-linecap="butt"/><path d="M1001.500 480.500H1005.500M1001.500 502H1005.500M1001.500 518.500H1005.500" stroke="#1a0000" stroke-width="1.200"/><rect x="996" y="445.500" width="15" height="23.500" rx="5.500" fill="#fe081c" stroke="#1a0000" stroke-width="1.300"/><path d="M996.500 452 Q1003.500 456.500 1010.500 452 M996.500 458.500 Q1003.500 463 1010.500 458.500" fill="none" stroke="#1a0000" stroke-width="1.200"/><path d="M999.500 446.500 Q1003.500 448.500 1007.500 446.500" fill="none" stroke="#1a0000" stroke-width="1"/><path d="M1058.5 446.8L1125.8 489.6" stroke="#1a0000" stroke-width="6.3" stroke-linecap="butt"/><path d="M1058.5 446.8L1125.8 489.6" stroke="#fe081c" stroke-width="3.9999999999999996" stroke-linecap="butt"/><path d="M1106.5 445.9L1138.3 435.3" stroke="#1a0000" stroke-width="5.7" stroke-linecap="butt"/><path d="M1106.5 445.9L1138.3 435.3" stroke="#fe081c" stroke-width="3.4" stroke-linecap="butt"/><path d="M1096 440L1148.5 473.3" stroke="#1a0000" stroke-width="6.3" stroke-linecap="butt"/><path d="M1096 440L1148.5 473.3" stroke="#fe081c" stroke-width="3.9999999999999996" stroke-linecap="butt"/><path d="M1140.3 435L1140.3 467.5" stroke="#1a0000" stroke-width="5.1" stroke-linecap="butt"/><path d="M1140.3 435L1140.3 467.5" stroke="#fe081c" stroke-width="2.8" stroke-linecap="butt"/><path d="M1138 441H1142.500M1138 455H1142.500M1138 459H1142.500M1138 463H1142.500" stroke="#1a0000" stroke-width="1"/><rect x="1141.500" y="446" width="5.500" height="6.500" rx="2" fill="#111"/><path d="M1048.4 465.6L1048.4 498" stroke="#1a0000" stroke-width="5.1" stroke-linecap="butt"/><path d="M1048.4 465.6L1048.4 498" stroke="#fe081c" stroke-width="2.8" stroke-linecap="butt"/><path d="M1046 471H1050.500M1046 485H1050.500M1046 489H1050.500M1046 493H1050.500" stroke="#1a0000" stroke-width="1"/><rect x="1049.500" y="476" width="4.500" height="6.500" rx="2" fill="#111"/><rect x="1092" y="439" width="6" height="12.500" rx="2.500" fill="#fe081c" stroke="#1a0000" stroke-width="1.200"/><path d="M1092.500 446H1097.500" stroke="#1a0000"/><path d="M1136.500 434.500 Q1140.500 433 1142 436.500" fill="none" stroke="#1a0000" stroke-width="1.200"/><path d="M1060 512.8L1145 487.8" stroke="#1a0000" stroke-width="6.5" stroke-linecap="butt"/><path d="M1060 512.8L1145 487.8" stroke="#fe081c" stroke-width="4.2" stroke-linecap="butt"/><path d="M1054 510.500 L1061 512.500 L1145 487.800" fill="none" stroke="#5a55e8" stroke-width="1.900" stroke-dasharray="4.500 3"/><path d="M1126.500 488.500 L1128.500 496.500" stroke="#1a0000" stroke-width="1.400"/><path d="M1042.500 514 l-.5 5.500 M1134.500 485 l-.5 4" stroke="#1a0000" stroke-width="1.600"/><path d="M1053 510 L1061 513.300" stroke="#1a0000" stroke-width="6.400" stroke-linecap="round"/><path d="M1053 510 L1061 513.300" stroke="#fe081c" stroke-width="4.400" stroke-linecap="round"/><g transform="translate(1050.5 509.5) rotate(30)"><rect x="-20" y="-5.500" width="14" height="11" rx="2.500" fill="#fe081c" stroke="#1a0000" stroke-width="1.300"/><path d="M-16 -5.500V5.500M-12.500 -5.500V5.500" stroke="#1a0000" stroke-width=".9"/><rect x="-7.500" y="-7.500" width="4" height="15" rx="1.500" fill="#fe081c" stroke="#1a0000" stroke-width="1.200"/><ellipse cx="0" cy="0" rx="5.500" ry="8.500" fill="#fe081c" stroke="#1a0000" stroke-width="1.300"/><ellipse cx="1.200" cy="0" rx="3.200" ry="5" fill="#fe081c" stroke="#1a0000" stroke-width="1"/><ellipse cx="2" cy="0" rx="1.500" ry="2.500" fill="#fe081c" stroke="#1a0000" stroke-width=".9"/></g><g transform="translate(1143 480.5) rotate(30)"><rect x="-20" y="-5.500" width="14" height="11" rx="2.500" fill="#fe081c" stroke="#1a0000" stroke-width="1.300"/><path d="M-16 -5.500V5.500M-12.500 -5.500V5.500" stroke="#1a0000" stroke-width=".9"/><rect x="-7.500" y="-7.500" width="4" height="15" rx="1.500" fill="#fe081c" stroke="#1a0000" stroke-width="1.200"/><ellipse cx="0" cy="0" rx="5.500" ry="8.500" fill="#fe081c" stroke="#1a0000" stroke-width="1.300"/><ellipse cx="1.200" cy="0" rx="3.200" ry="5" fill="#fe081c" stroke="#1a0000" stroke-width="1"/><ellipse cx="2" cy="0" rx="1.500" ry="2.500" fill="#fe081c" stroke="#1a0000" stroke-width=".9"/></g><path d="M1053 509.500 L1057.500 512" stroke="#5a55e8" stroke-width="1.500"/><path d="M1142 474 Q1150 474 1150 482 V994" fill="none" stroke="#1a0000" stroke-width="6"/><path d="M1142 474 Q1150 474 1150 482 V994" fill="none" stroke="#fe081c" stroke-width="4"/><path d="M1148.500 484 L1143 481" stroke="#5a55e8" stroke-width="1.500"/><rect x="1147" y="617.500" width="6" height="8" fill="#0c0cf4"/><path d="M1152 621 L1170 634" stroke="#0c0cf4" stroke-width="4.600"/><path d="M1153.500 622.500 L1167 632" stroke="#e0507a" stroke-width="1.200"/><path d="M1168 630.500 L1176 636.500 L1174 641 L1169 640 Z M1175.500 637 L1180.500 638.500 L1179.500 642 L1177 643 L1174.500 640.500Z" fill="#0c0cf4"/><rect x="1147" y="758.5" width="6" height="7.500" fill="#fe081c" stroke="#1a0000" stroke-width="1"/><path d="M1148 760.0 l3 4 M1148 763.0 l2 2.500" stroke="#1a0000" stroke-width=".8"/><path d="M1152.5 762.0L1170 774.5" stroke="#1a0000" stroke-width="5.1" stroke-linecap="butt"/><path d="M1152.5 762.0L1170 774.5" stroke="#fe081c" stroke-width="2.8" stroke-linecap="butt"/><path d="M1167.500 771.0 L1176 777.0 L1174 781.5 L1169.500 780.5 Z M1175.500 777.5 L1180.500 779.0 L1179.500 782.5 L1177 783.5 L1174.500 781.0Z" fill="#fe081c" stroke="#1a0000" stroke-width="1.200" stroke-linejoin="round"/><rect x="1147" y="898.5" width="6" height="7.500" fill="#fe081c" stroke="#1a0000" stroke-width="1"/><path d="M1148 900.0 l3 4 M1148 903.0 l2 2.500" stroke="#1a0000" stroke-width=".8"/><path d="M1152.5 902.0L1170 914.5" stroke="#1a0000" stroke-width="5.1" stroke-linecap="butt"/><path d="M1152.5 902.0L1170 914.5" stroke="#fe081c" stroke-width="2.8" stroke-linecap="butt"/><path d="M1167.500 911.0 L1176 917.0 L1174 921.5 L1169.500 920.5 Z M1175.500 917.5 L1180.500 919.0 L1179.500 922.5 L1177 923.5 L1174.500 921.0Z" fill="#fe081c" stroke="#1a0000" stroke-width="1.200" stroke-linejoin="round"/><path d="M1214.500 596.500 L1165 628" stroke="#ff6a6a" stroke-width="1"/></svg>
<div style="left:1214px;top:447px;width:301px;height:150px;border:1px solid #ff8585;box-sizing:border-box;"></div>
<div id="t114" style="top:448.3px;line-height:24px;font-size:19.85px;color:#fd4e4e;white-space:nowrap;font-weight:bold;left:1212.30px;width:300px;text-align:center;text-decoration:underline;text-underline-offset:3px;text-decoration-thickness:1.500px;"><span>Corte: 1</span></div>
<div id="t115" style="top:471.9px;line-height:24px;font-size:19.85px;color:#fd4e4e;white-space:nowrap;font-weight:bold;left:1212.30px;width:300px;text-align:center;"><span>Fluxo: 300.00 L/min</span></div>
<div id="t116" style="top:495.5px;line-height:24px;font-size:19.85px;color:#fd4e4e;white-space:nowrap;font-weight:bold;left:1212.30px;width:300px;text-align:center;"><span>Pressão estática: 0.986 kPa</span></div>
<div id="t117" style="top:519.2px;line-height:24px;font-size:19.85px;color:#fd4e4e;white-space:nowrap;font-weight:bold;left:1212.30px;width:300px;text-align:center;"><span>Perda de pressão: 0.986 kPa</span></div>
<div id="t118" style="top:543.1px;line-height:24px;font-size:19.85px;color:#fd4e4e;white-space:nowrap;font-weight:bold;left:1212.30px;width:300px;text-align:center;"><span>Pressão total: 1.899 kPa</span></div>
<div id="t119" style="top:567.1px;line-height:24px;font-size:19.85px;color:#fd4e4e;white-space:nowrap;font-weight:bold;left:1212.30px;width:300px;text-align:center;"><span>Excesso de pressão: 0.000 kPa</span></div>
<svg style="left:0;top:0" width="1920" height="1040" viewBox="0 0 1920 1040"><ellipse cx="1809" cy="337.500" rx="65.500" ry="33" fill="#f4f4f4" stroke="#dedede" stroke-width="1"/><ellipse cx="1809" cy="335" rx="50" ry="24.500" fill="#ffffff" stroke="#e0e0e0" stroke-width="1"/><defs><filter id="bl" x="-30%" y="-30%" width="160%" height="160%"><feGaussianBlur stdDeviation="3.500"/></filter><linearGradient id="cf" x1="0" y1="0" x2="0" y2="1"><stop offset="0" stop-color="#f0f0f0"/><stop offset="1" stop-color="#dedede"/></linearGradient></defs><ellipse cx="1812" cy="338" rx="32" ry="13" fill="#dedede" filter="url(#bl)"/><path d="M1775.200 282.700 L1813.300 272.500 L1843.800 286.800 L1803.200 299.500Z" fill="#efefef" stroke="#aeaeae" stroke-width="1"/><path d="M1803.200 299.500 L1843.800 286.800  L1841.900 329.700 L1803.200 344.900Z" fill="url(#cf)" stroke="#aeaeae" stroke-width="1"/><path d="M1775.200 282.700 L1803.200 299.500 L1803.200 344.900 L1777.800 324.900Z" fill="#e9e9e9" stroke="#aeaeae" stroke-width="1"/><text transform="matrix(.95 -.33 0 1 1805.500 326.500)" font-size="11" font-weight="bold" fill="#a6a8ad" font-family="Liberation Sans, sans-serif" textLength="35" lengthAdjust="spacingAndGlyphs">FRONTAL</text><text transform="matrix(.78 .56 0 1 1777.500 311)" font-size="8" font-weight="bold" fill="#a9abb0" font-family="Liberation Sans, sans-serif" textLength="32" lengthAdjust="spacingAndGlyphs">ESQUERDA</text><text transform="matrix(.85 -.25 .8 .35 1792 292.500)" font-size="8" font-weight="bold" fill="#aeb0b4" font-family="Liberation Sans, sans-serif" textLength="36" lengthAdjust="spacingAndGlyphs">SUPERIOR</text><ellipse cx="1756.500" cy="351" rx="7" ry="4" fill="none" stroke="#d4d4d4" stroke-width="1.500"/><ellipse cx="1849.500" cy="361" rx="7" ry="4" fill="none" stroke="#d4d4d4" stroke-width="1.500"/></svg>
<div style="left:1863px;top:388px;width:36px;height:118px;background:#f7f7f7;border:2px solid #c4c4c4;box-sizing:border-box;border-radius:6px;"></div>
<svg style="left:0;top:0" width="1920" height="1040" viewBox="0 0 1920 1040"><circle cx="1890.500" cy="395.500" r="3.500" fill="#ddd" stroke="#bdbdbd"/><path d="M1889 394L1892 397M1892 394L1889 397" stroke="#999" stroke-width=".9"/><path d="M1870 420 A11 11 0 1 1 1892 420 V409 H1881 A11 11 0 0 0 1870 420Z" fill="#e9e9e9"/><circle cx="1881" cy="420" r="11" fill="#e6e8ec" stroke="#b4b4b4" stroke-width="1.200"/><path d="M1881 409 H1890 Q1892 409 1892 411 V420" fill="#e6e8ec" stroke="#b4b4b4" stroke-width="1.200"/><circle cx="1881" cy="420" r="6.500" fill="#fafafa" stroke="#b9b9b9" stroke-width="1.200"/><path d="M1873 427 A11 11 0 0 0 1889 427 L1885.500 424.500 A6.500 6.500 0 0 1 1876.500 424.500Z" fill="#f2f2f2" stroke="#b4b4b4"/><path d="M1878 439.500H1884L1881 443Z" fill="#999"/><path d="M1868 446.500H1894" stroke="#cfcfcf" stroke-width="1"/><path d="M1874 456L1881 463M1881 456L1874 463M1874 456v2.500M1874 456h2.500M1881 456v2.500M1881 456h-2.500M1874 463v-2.500M1874 463h2.500" stroke="#ababab" stroke-width="1" fill="none"/><circle cx="1885" cy="466" r="3" fill="#f6f6f6" stroke="#999" stroke-width="1.200"/><path d="M1887 468.500L1890 472" stroke="#888" stroke-width="1.800"/><path d="M1878 480.500H1884L1881 484Z" fill="#999"/><circle cx="1890.500" cy="498" r="3.500" fill="#ddd" stroke="#bdbdbd"/><path d="M1888.500 498H1892.500" stroke="#999" stroke-width="1"/></svg>
<div style="left:0px;top:1013px;width:1920px;height:27px;background:#cdcdcd;"></div>
<div id="t120" style="top:1018.0px;line-height:16px;font-size:12px;color:#111;white-space:nowrap;letter-spacing:-0.059px;left:5px;"><span>Pré-realçar o elemento para obter informações do corte do sistema</span></div>
<svg style="left:861.0px;top:1017.0px" width="18" height="18" viewBox="0 0 18 18"><path d="M2 8H7V16H2Z M11 6H16V16H11Z M6 4L9 2H13V5" fill="#bdbdbd" stroke="#8e8e8e" stroke-width="1"/><path d="M7 10H11" stroke="#8e8e8e" stroke-width="1.500"/><path d="M9 3.500C9 2 12 2 11 4L10 5.500" fill="none" stroke="#777" stroke-width="1.100"/></svg>
<div style="left:886px;top:1017px;width:204px;height:18px;background:#ffffff;border:1px solid #d8d8d8;box-sizing:border-box;"></div>
<svg style="left:1077px;top:1023px" width="10" height="6"><path d="M1 1L5 5L9 1" fill="none" stroke="#9a9a9a" stroke-width="1"/></svg>
<svg style="left:1097.0px;top:1017.0px" width="18" height="18" viewBox="0 0 18 18"><path d="M3 15 L6 8 H9 L10 3 H15 L14 6 H11.500 L10.500 9 L7 15Z" fill="#bdbdbd" stroke="#8e8e8e" stroke-width="1"/><path d="M11 1.500L15 1" stroke="#8e8e8e" stroke-width="1.500"/></svg>
<div id="t121" style="top:1018.0px;line-height:16px;font-size:12px;color:#222;white-space:nowrap;letter-spacing:-0.008px;left:1119px;"><span>:0</span></div>
<svg style="left:1151.0px;top:1017.0px" width="18" height="18" viewBox="0 0 18 18"><rect x="1.500" y="2" width="15" height="14" rx="1" fill="#fff" stroke="#2a2f3a" stroke-width="1.300"/><rect x="2" y="2.500" width="14" height="3" fill="#555c6c"/><rect x="3.500" y="7.500" width="3" height="2" fill="#2a2f3a"/><rect x="3.500" y="11.500" width="3" height="2" fill="#2a2f3a"/><path d="M8 8.500H14.500M8 12.500H14.500" stroke="#2a2f3a" stroke-width="1"/></svg>
<svg style="left:1177.0px;top:1017.0px" width="18" height="18" viewBox="0 0 18 18"><rect x="2" y="2" width="14" height="14" fill="#9a9a9a"/><path d="M4 14L12 6V14Z" fill="#d9d9d9"/><path d="M3 5H8M6 3L8 5L6 7" stroke="#6a6a6a" stroke-width="1.200" fill="none"/></svg>
<div style="left:1201px;top:1017px;width:205px;height:18px;background:#ffffff;border:1px solid #d8d8d8;box-sizing:border-box;"></div>
<div id="t122" style="top:1018.0px;line-height:16px;font-size:12px;color:#6d6d6d;white-space:nowrap;letter-spacing:0.101px;left:1205px;"><span>Modelo principal</span></div>
<svg style="left:1393px;top:1023px" width="10" height="6"><path d="M1 1L5 5L9 1" fill="none" stroke="#9a9a9a" stroke-width="1"/></svg>
<svg style="left:1643.5px;top:1017.0px" width="18" height="18" viewBox="0 0 18 18"><rect x="1" y="3" width="8" height="5" rx="2.500" fill="none" stroke="#a87908" stroke-width="1.800"/><rect x="6" y="3" width="8" height="5" rx="2.500" fill="none" stroke="#e0a818" stroke-width="1.800"/><path d="M10 8V16L12 14L13.500 17L15 16.300L13.500 13.500H16Z" fill="#fff" stroke="#222" stroke-width=".9" stroke-linejoin="round"/></svg>
<svg style="left:1669.5px;top:1017.0px" width="18" height="18" viewBox="0 0 18 18"><path d="M1 11L5 7H13L9 11Z M3 7L7 3H15L11 7" fill="none" stroke="#1a5fb4" stroke-width="1.200"/><path d="M10 8V16L12 14L13.500 17L15 16.300L13.500 13.500H16Z" fill="#fff" stroke="#222" stroke-width=".9" stroke-linejoin="round"/></svg>
<svg style="left:1696.0px;top:1017.0px" width="18" height="18" viewBox="0 0 18 18"><path d="M3 2H11V7H3Z" fill="#f3a64a" stroke="#b85c10" stroke-width="1.100"/><path d="M5 7L4 11M9 7L10 11M7 7V13" stroke="#b85c10" stroke-width="1.100"/><path d="M10 8V16L12 14L13.500 17L15 16.300L13.500 13.500H16Z" fill="#fff" stroke="#222" stroke-width=".9" stroke-linejoin="round"/></svg>
<svg style="left:1721.5px;top:1017.0px" width="18" height="18" viewBox="0 0 18 18"><path d="M2 3L9 5V15L2 13Z" fill="#cfe3f7" stroke="#1a5fb4" stroke-width="1.200"/><path d="M9 5L13 3V8" fill="none" stroke="#1a5fb4" stroke-width="1.100"/><path d="M10 8V16L12 14L13.500 17L15 16.300L13.500 13.500H16Z" fill="#fff" stroke="#222" stroke-width=".9" stroke-linejoin="round"/></svg>
<svg style="left:1748.0px;top:1017.0px" width="18" height="18" viewBox="0 0 18 18"><path d="M6 1V11M1 6H11M4.500 2.500L6 1L7.500 2.500M4.500 9.500L6 11L7.500 9.500M2.500 4.500L1 6L2.500 7.500M9.500 4.500L11 6L9.500 7.500" fill="none" stroke="#222" stroke-width="1.100"/><path d="M11 2L16 7M16 2L11 7" stroke="#d61f26" stroke-width="1.700"/><path d="M10 8V16L12 14L13.500 17L15 16.300L13.500 13.500H16Z" fill="#fff" stroke="#222" stroke-width=".9" stroke-linejoin="round"/></svg>
<svg style="left:1773.0px;top:1017.0px" width="18" height="18" viewBox="0 0 18 18"><circle cx="9" cy="9" r="5" fill="none" stroke="#b5b5b5" stroke-width="2.500" stroke-dasharray="2.500 1.500"/></svg>
<svg style="left:1796.0px;top:1017.0px" width="18" height="18" viewBox="0 0 18 18"><path d="M2 3H16L11 9.500V15L7 13V9.500Z" fill="#dfe6f2" stroke="#39476a" stroke-width="1.300" stroke-linejoin="round"/></svg>
<div id="t123" style="top:1018.0px;line-height:16px;font-size:12px;color:#222;white-space:nowrap;letter-spacing:-0.008px;left:1814px;"><span>:0</span></div>
</body></html>
